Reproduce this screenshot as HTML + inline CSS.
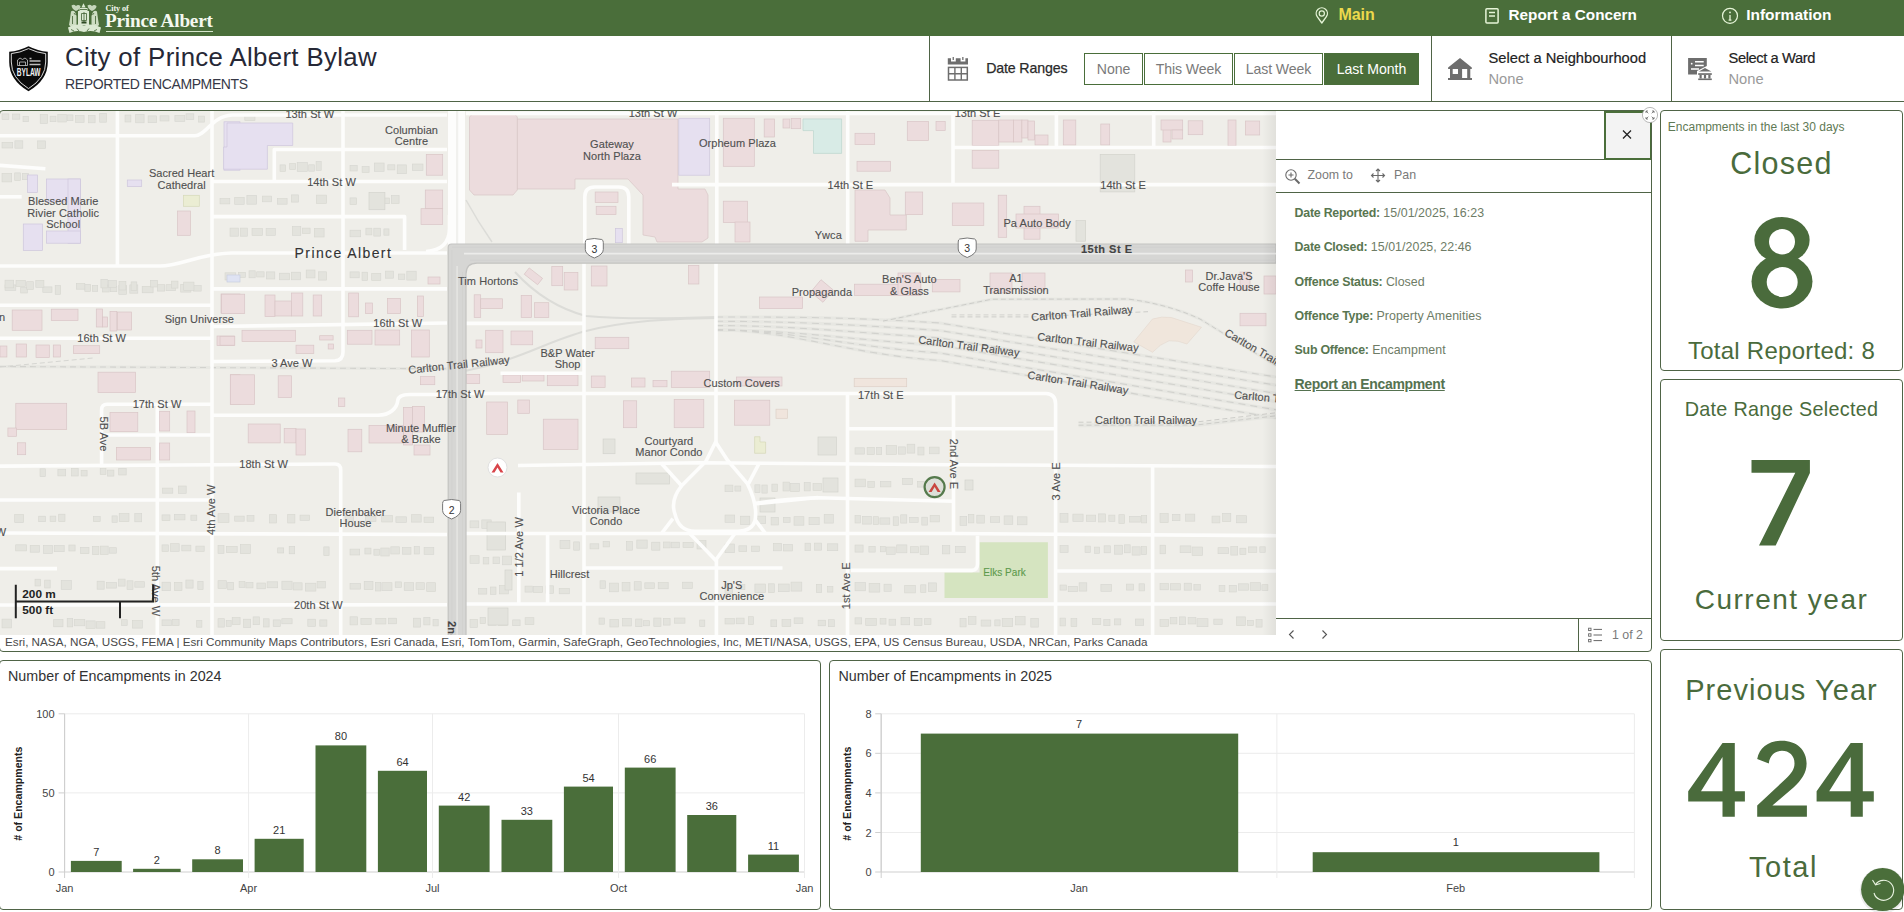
<!DOCTYPE html>
<html><head><meta charset="utf-8">
<style>
*{box-sizing:border-box;margin:0;padding:0}
html,body{width:1904px;height:912px;overflow:hidden;background:#fff;font-family:"Liberation Sans",sans-serif;position:relative}
.a{position:absolute;line-height:1;white-space:nowrap}
.bd{position:absolute;border:1px solid #4f6446;border-radius:4px;background:#fff}
.vl{position:absolute;width:1px;background:#4f6446}
.hl{position:absolute;height:1px;background:#4f6446}
.btn{position:absolute;top:53px;height:32px;border:1px solid #4a6e3a;color:#7a7a7a;font-size:14.6px;line-height:30px;text-align:center;background:#fff}
svg{position:absolute;overflow:visible}
</style></head><body>
<div style="position:absolute;left:0;top:0;width:1904px;height:36px;background:#4a6e3a"></div>
<svg style="left:0;top:0" width="120" height="36" viewBox="0 0 120 36">
<g fill="#dbe9d2">
<path d="M83.5 3.2 L85.6 7.5 L81.4 7.5 Z"/>
<path d="M71.5 5.5 q2.5 -1.5 4.5 0.5 q2 -2 4.5 0 q0 3 -4.5 5 q-4 -2 -4.5 -5.5 z" opacity="0.85"/>
<path d="M87.5 5.5 q2.5 -1.5 4.5 0.5 q2 -2 4.5 0 q0 3 -4.5 5 q-4 -2 -4.5 -5.5 z" opacity="0.85"/>
<path d="M79.5 8 h8 v3 h1.5 v14 h-11 v-14 h1.5 z"/>
<path d="M71 11.5 q2 -1.5 4 0.5 l1.5 4 v9.5 l-3 3.5 l-4.5 -4 l1 -6 z" opacity="0.9"/>
<path d="M97 11.5 q-2 -1.5 -4 0.5 l-1.5 4 v9.5 l3 3.5 l4.5 -4 l-1 -6 z" opacity="0.9"/>
<path d="M68 27.5 q8 -5 16 -2 q8 -3 17 2 l-1.5 5.5 q-7.5 -3.5 -15.5 -1 q-8 -2.5 -14.5 1 z"/>
</g>
<g fill="none" stroke="#3f5f31" stroke-width="0.8">
<path d="M81.5 13.5 h5 v7 h-5 z M84 12 v10"/>
<path d="M72.5 16 v8 M95.5 16 v8 M74 13 l1.5 2 M94 13 l-1.5 2"/>
<path d="M71 29.5 l3 1.5 M77 28.5 l2 2.5 M89 28.5 l-2 2.5 M97 29.5 l-3 1.5"/>
<path d="M80 9.5 h7"/>
</g>
<rect x="81.5" y="21.5" width="5" height="2" fill="#2d4a22"/>
</svg>
<div class="a" style="left:105.5px;top:4.86px;font-size:8.2px;color:#f4f8ef;font-weight:700;font-family:'Liberation Serif',serif;letter-spacing:-0.1px">City of</div>
<div class="a" style="left:105px;top:11.45px;font-size:19.2px;color:#f4f8ef;font-weight:700;font-family:'Liberation Serif',serif;letter-spacing:-0.2px">Prince Albert</div>
<div style="position:absolute;left:105.5px;top:31px;width:107.5px;height:1px;background:#d6e6cc"></div>
<svg style="left:1300px;top:0" width="60" height="36" viewBox="1300 0 60 36">
<path d="M1321.8 23 L1317.2 16.6 A5.6 5.6 0 1 1 1326.4 16.6 Z" fill="none" stroke="#e6f5d8" stroke-width="1.3" stroke-linejoin="round"/>
<circle cx="1321.8" cy="13.5" r="2.6" fill="none" stroke="#e6f5d8" stroke-width="1.2"/>
</svg>
<svg style="left:1470px;top:0" width="40" height="36" viewBox="1470 0 40 36">
<rect x="1485.9" y="8.8" width="12.2" height="14.2" rx="1" fill="none" stroke="#e6f5d8" stroke-width="1.5"/>
<path d="M1489 12.5 h6 M1489 16 h6" stroke="#e6f5d8" stroke-width="1.3"/>
</svg>
<svg style="left:1710px;top:0" width="40" height="36" viewBox="1710 0 40 36">
<circle cx="1730" cy="15.8" r="7.5" fill="none" stroke="#e6f5d8" stroke-width="1.2"/>
<circle cx="1730" cy="12.4" r="0.9" fill="#e6f5d8"/>
<path d="M1730 15 v5 M1728.6 20.2 h2.8" stroke="#e6f5d8" stroke-width="1.3"/>
</svg>
<div class="a" style="left:1338.4px;top:6.76px;font-size:16px;color:#ecd94c;font-weight:700;">Main</div>
<div class="a" style="left:1508.5px;top:7.35px;font-size:15.3px;color:#ffffff;font-weight:700;">Report a Concern</div>
<div class="a" style="left:1746.2px;top:7.18px;font-size:15.5px;color:#ffffff;font-weight:700;">Information</div>
<div class="hl" style="left:0;top:101px;width:1904px"></div>
<div class="vl" style="left:929px;top:36px;height:65px"></div>
<div class="vl" style="left:1431px;top:36px;height:65px"></div>
<div class="vl" style="left:1671px;top:36px;height:65px"></div>
<svg style="left:0;top:40px" width="60" height="60" viewBox="0 40 60 60">
<path d="M28.5 46.2 Q38 51 47.8 51.8 L47.8 62 Q47.8 80 28.5 91.3 Q9.2 80 9.2 62 L9.2 51.8 Q19 51 28.5 46.2 Z" fill="#0a0a0a"/>
<path d="M28.5 48.6 Q37 52.8 45.7 53.6 L45.7 62 Q45.7 78 28.5 88.6 Q11.3 78 11.3 62 L11.3 53.6 Q20 52.8 28.5 48.6 Z" fill="none" stroke="#f0f0f0" stroke-width="0.9"/>
<g fill="none" stroke="#c8c8c8" stroke-width="0.8">
<path d="M17.5 65.5 V60 L20 58 L22.5 59.5 L25 58 L27.5 60 V65.5 Z"/>
<path d="M19.5 65.5 V62 H25.5 V65.5"/>
</g>
<path d="M29.5 58.5 h2 M29.5 61 h11 M29.5 64.5 h11" stroke="#bdbdbd" stroke-width="1.6"/>
<text x="16.8" y="75.8" textLength="23.7" lengthAdjust="spacingAndGlyphs" font-family="Liberation Sans" font-weight="700" font-size="10" fill="#f4f4f4">BYLAW</text>
</svg>
<div class="a" style="left:65px;top:45.36px;font-size:25.8px;color:#262836;font-weight:400;letter-spacing:0.35px">City of Prince Albert Bylaw</div>
<div class="a" style="left:65px;top:77.05px;font-size:14px;color:#363846;font-weight:400;letter-spacing:-0.38px">REPORTED ENCAMPMENTS</div>
<svg style="left:940px;top:50px" width="40" height="40" viewBox="940 50 40 40">
<path d="M947.8 58.3 H951 V61.5 H955.8 V58.3 H960.6 V61.5 H965.4 V58.3 H968 V64.5 H947.8 Z" fill="#6e6e6e"/>
<rect x="952.6" y="57" width="1.3" height="3" fill="#6e6e6e"/><rect x="962.2" y="57" width="1.3" height="3" fill="#6e6e6e"/>
<rect x="948.5" y="67.4" width="18.8" height="12.6" fill="none" stroke="#6e6e6e" stroke-width="1.5"/>
<path d="M954.9 67.4 V80 M961.3 67.4 V80 M948.5 73.7 H967.3" stroke="#6e6e6e" stroke-width="1.4"/>
</svg>
<div class="a" style="left:986.2px;top:61.18px;font-size:14.2px;color:#2a2a2a;font-weight:400;-webkit-text-stroke:0.25px #2a2a2a;letter-spacing:-0.15px">Date Ranges</div>
<div class="btn" style="left:1084px;width:59px;font-size:14.1px;letter-spacing:-0.1px">None</div>
<div class="btn" style="left:1144px;width:89px;font-size:14.1px;letter-spacing:-0.1px">This Week</div>
<div class="btn" style="left:1234px;width:89px;font-size:14.1px;letter-spacing:-0.1px">Last Week</div>
<div class="btn" style="left:1324px;width:95px;background:#4a6e3a;color:#fff;border-color:#4a6e3a;font-size:14.1px">Last Month</div>
<svg style="left:1440px;top:50px" width="40" height="40" viewBox="1440 50 40 40">
<path d="M1460 58.1 L1471.8 67.6 V69 H1470.3 V78 H1472 V80 H1448 V78 H1450 V69 H1448.1 V67.6 Z M1452.7 69 V73.9 H1458 V69 Z M1462.1 69 V78 H1467.2 V69 Z" fill="#6e6e6e" fill-rule="evenodd"/>
</svg>
<div class="a" style="left:1488.5px;top:50.56px;font-size:14.7px;color:#222;font-weight:400;-webkit-text-stroke:0.2px #222">Select a Neighbourhood</div>
<div class="a" style="left:1488.5px;top:71.56px;font-size:14.7px;color:#9a9a9a;font-weight:400;">None</div>
<svg style="left:1680px;top:50px" width="40" height="40" viewBox="1680 50 40 40">
<path d="M1688.1 57.9 H1706.8 V66 L1697 71 V74.6 H1688.1 Z" fill="#6e6e6e"/>
<path d="M1695 61.8 H1703.7 M1695 65.6 H1703.7 M1691 68.9 H1699" stroke="#fff" stroke-width="1.5"/>
<circle cx="1691.7" cy="63.7" r="0.9" fill="#fff"/>
<path d="M1705 68 L1711.4 71.5 H1698.9 Z" fill="#6e6e6e"/>
<rect x="1698.2" y="73.2" width="13.6" height="1.7" fill="#6e6e6e"/>
<rect x="1699.5" y="75" width="2.2" height="3.5" fill="#6e6e6e"/><rect x="1703.9" y="75" width="2.2" height="3.5" fill="#6e6e6e"/><rect x="1708.3" y="75" width="2.2" height="3.5" fill="#6e6e6e"/>
<rect x="1698.2" y="78.5" width="13.6" height="1.6" fill="#6e6e6e"/>
</svg>
<div class="a" style="left:1728.5px;top:50.56px;font-size:14.7px;color:#222;font-weight:400;-webkit-text-stroke:0.2px #222;letter-spacing:-0.4px">Select a Ward</div>
<div class="a" style="left:1728.5px;top:71.56px;font-size:14.7px;color:#9a9a9a;font-weight:400;">None</div>
<svg style="left:0;top:111px;overflow:hidden" width="1276" height="524" viewBox="0 111 1276 524"><rect x="0" y="111" width="1276" height="524" fill="#efeee9"/><path d="M1133.8 341.9 L1152.5 319 Q1162 316 1171.3 317.5 L1201.5 327.3 L1186.9 344 Q1178 340 1169 340.8 Q1160 344 1152.5 352.3 Z" fill="#f0e6dc" stroke="#e2d6cc" stroke-width="0.6"/><rect x="2.0" y="113.9" width="6.9" height="5.6" fill="#e3e3dd" stroke="#d6d6d0" stroke-width="0.6"/><rect x="12.6" y="114.0" width="7.2" height="5.2" fill="#e3e3dd" stroke="#d6d6d0" stroke-width="0.6"/><rect x="23.0" y="116.3" width="5.4" height="5.4" fill="#e3e3dd" stroke="#d6d6d0" stroke-width="0.6"/><rect x="40.2" y="114.6" width="7.4" height="8.9" fill="#e3e3dd" stroke="#d6d6d0" stroke-width="0.6"/><rect x="50.1" y="116.2" width="5.9" height="5.5" fill="#e3e3dd" stroke="#d6d6d0" stroke-width="0.6"/><rect x="57.8" y="114.4" width="8.5" height="7.6" fill="#e3e3dd" stroke="#d6d6d0" stroke-width="0.6"/><rect x="67.6" y="114.9" width="5.4" height="5.8" fill="#e3e3dd" stroke="#d6d6d0" stroke-width="0.6"/><rect x="75.6" y="115.5" width="8.5" height="6.8" fill="#e3e3dd" stroke="#d6d6d0" stroke-width="0.6"/><rect x="88.6" y="115.5" width="6.5" height="7.3" fill="#e3e3dd" stroke="#d6d6d0" stroke-width="0.6"/><rect x="99.7" y="113.3" width="6.7" height="8.9" fill="#e3e3dd" stroke="#d6d6d0" stroke-width="0.6"/><rect x="125.0" y="115.0" width="5.9" height="7.0" fill="#e3e3dd" stroke="#d6d6d0" stroke-width="0.6"/><rect x="135.7" y="114.3" width="8.4" height="8.5" fill="#e3e3dd" stroke="#d6d6d0" stroke-width="0.6"/><rect x="148.1" y="115.9" width="8.5" height="6.8" fill="#e3e3dd" stroke="#d6d6d0" stroke-width="0.6"/><rect x="160.0" y="115.8" width="9.0" height="5.2" fill="#e3e3dd" stroke="#d6d6d0" stroke-width="0.6"/><rect x="174.9" y="115.4" width="9.9" height="6.1" fill="#e3e3dd" stroke="#d6d6d0" stroke-width="0.6"/><rect x="186.0" y="113.8" width="7.8" height="5.7" fill="#e3e3dd" stroke="#d6d6d0" stroke-width="0.6"/><rect x="198.6" y="116.1" width="5.8" height="6.0" fill="#e3e3dd" stroke="#d6d6d0" stroke-width="0.6"/><rect x="244.8" y="114.5" width="10.2" height="6.1" fill="#e3e3dd" stroke="#d6d6d0" stroke-width="0.6"/><rect x="2.0" y="142.4" width="10.7" height="5.6" fill="#e3e3dd" stroke="#d6d6d0" stroke-width="0.6"/><rect x="14.9" y="140.8" width="7.9" height="7.4" fill="#e3e3dd" stroke="#d6d6d0" stroke-width="0.6"/><rect x="37.6" y="140.9" width="8.1" height="7.5" fill="#e3e3dd" stroke="#d6d6d0" stroke-width="0.6"/><rect x="2.0" y="173.4" width="9.7" height="8.5" fill="#e3e3dd" stroke="#d6d6d0" stroke-width="0.6"/><rect x="14.7" y="172.9" width="5.6" height="7.5" fill="#e3e3dd" stroke="#d6d6d0" stroke-width="0.6"/><rect x="22.3" y="173.3" width="6.0" height="6.4" fill="#e3e3dd" stroke="#d6d6d0" stroke-width="0.6"/><rect x="280.0" y="164.9" width="5.6" height="6.5" fill="#e3e3dd" stroke="#d6d6d0" stroke-width="0.6"/><rect x="289.7" y="163.6" width="5.9" height="6.0" fill="#e3e3dd" stroke="#d6d6d0" stroke-width="0.6"/><rect x="297.2" y="162.5" width="10.1" height="9.0" fill="#e3e3dd" stroke="#d6d6d0" stroke-width="0.6"/><rect x="308.7" y="164.8" width="5.6" height="6.4" fill="#e3e3dd" stroke="#d6d6d0" stroke-width="0.6"/><rect x="316.1" y="161.5" width="5.1" height="8.8" fill="#e3e3dd" stroke="#d6d6d0" stroke-width="0.6"/><rect x="350.0" y="165.3" width="7.2" height="5.7" fill="#e3e3dd" stroke="#d6d6d0" stroke-width="0.6"/><rect x="362.1" y="166.5" width="7.0" height="5.9" fill="#e3e3dd" stroke="#d6d6d0" stroke-width="0.6"/><rect x="374.3" y="163.0" width="9.8" height="8.3" fill="#e3e3dd" stroke="#d6d6d0" stroke-width="0.6"/><rect x="387.8" y="164.8" width="7.1" height="5.1" fill="#e3e3dd" stroke="#d6d6d0" stroke-width="0.6"/><rect x="397.2" y="164.9" width="9.2" height="8.8" fill="#e3e3dd" stroke="#d6d6d0" stroke-width="0.6"/><rect x="412.3" y="164.0" width="10.7" height="6.5" fill="#e3e3dd" stroke="#d6d6d0" stroke-width="0.6"/><rect x="220.0" y="198.6" width="9.8" height="5.3" fill="#e3e3dd" stroke="#d6d6d0" stroke-width="0.6"/><rect x="234.7" y="197.4" width="9.5" height="6.9" fill="#e3e3dd" stroke="#d6d6d0" stroke-width="0.6"/><rect x="246.9" y="195.3" width="9.8" height="8.9" fill="#e3e3dd" stroke="#d6d6d0" stroke-width="0.6"/><rect x="262.4" y="196.1" width="9.3" height="5.7" fill="#e3e3dd" stroke="#d6d6d0" stroke-width="0.6"/><rect x="277.3" y="198.6" width="9.8" height="5.6" fill="#e3e3dd" stroke="#d6d6d0" stroke-width="0.6"/><rect x="291.4" y="194.9" width="7.1" height="7.2" fill="#e3e3dd" stroke="#d6d6d0" stroke-width="0.6"/><rect x="316.4" y="195.1" width="10.2" height="8.3" fill="#e3e3dd" stroke="#d6d6d0" stroke-width="0.6"/><rect x="350.0" y="197.9" width="6.6" height="6.7" fill="#e3e3dd" stroke="#d6d6d0" stroke-width="0.6"/><rect x="370.2" y="196.6" width="10.5" height="7.0" fill="#e3e3dd" stroke="#d6d6d0" stroke-width="0.6"/><rect x="381.8" y="198.0" width="7.6" height="5.7" fill="#e3e3dd" stroke="#d6d6d0" stroke-width="0.6"/><rect x="391.3" y="195.5" width="7.8" height="7.9" fill="#e3e3dd" stroke="#d6d6d0" stroke-width="0.6"/><rect x="230.0" y="228.1" width="8.3" height="8.1" fill="#e3e3dd" stroke="#d6d6d0" stroke-width="0.6"/><rect x="240.6" y="228.1" width="6.7" height="8.1" fill="#e3e3dd" stroke="#d6d6d0" stroke-width="0.6"/><rect x="252.0" y="228.6" width="10.5" height="6.8" fill="#e3e3dd" stroke="#d6d6d0" stroke-width="0.6"/><rect x="266.1" y="228.5" width="9.2" height="6.8" fill="#e3e3dd" stroke="#d6d6d0" stroke-width="0.6"/><rect x="292.4" y="226.5" width="8.4" height="8.8" fill="#e3e3dd" stroke="#d6d6d0" stroke-width="0.6"/><rect x="302.4" y="228.1" width="7.7" height="5.3" fill="#e3e3dd" stroke="#d6d6d0" stroke-width="0.6"/><rect x="314.4" y="228.4" width="9.7" height="8.6" fill="#e3e3dd" stroke="#d6d6d0" stroke-width="0.6"/><rect x="350.0" y="230.2" width="10.7" height="6.6" fill="#e3e3dd" stroke="#d6d6d0" stroke-width="0.6"/><rect x="365.9" y="228.2" width="6.0" height="6.7" fill="#e3e3dd" stroke="#d6d6d0" stroke-width="0.6"/><rect x="373.8" y="228.2" width="6.9" height="7.9" fill="#e3e3dd" stroke="#d6d6d0" stroke-width="0.6"/><rect x="383.9" y="228.9" width="5.1" height="6.3" fill="#e3e3dd" stroke="#d6d6d0" stroke-width="0.6"/><rect x="5.0" y="284.9" width="10.8" height="5.4" fill="#e3e3dd" stroke="#d6d6d0" stroke-width="0.6"/><rect x="20.7" y="287.5" width="6.6" height="5.5" fill="#e3e3dd" stroke="#d6d6d0" stroke-width="0.6"/><rect x="42.8" y="286.9" width="9.2" height="5.4" fill="#e3e3dd" stroke="#d6d6d0" stroke-width="0.6"/><rect x="55.2" y="285.5" width="5.4" height="8.8" fill="#e3e3dd" stroke="#d6d6d0" stroke-width="0.6"/><rect x="84.8" y="284.3" width="5.8" height="7.1" fill="#e3e3dd" stroke="#d6d6d0" stroke-width="0.6"/><rect x="92.4" y="285.5" width="5.3" height="5.8" fill="#e3e3dd" stroke="#d6d6d0" stroke-width="0.6"/><rect x="102.5" y="285.0" width="6.7" height="7.0" fill="#e3e3dd" stroke="#d6d6d0" stroke-width="0.6"/><rect x="110.3" y="286.6" width="6.5" height="5.1" fill="#e3e3dd" stroke="#d6d6d0" stroke-width="0.6"/><rect x="118.8" y="285.6" width="7.8" height="8.7" fill="#e3e3dd" stroke="#d6d6d0" stroke-width="0.6"/><rect x="129.8" y="284.9" width="8.0" height="8.3" fill="#e3e3dd" stroke="#d6d6d0" stroke-width="0.6"/><rect x="142.2" y="286.4" width="10.9" height="6.4" fill="#e3e3dd" stroke="#d6d6d0" stroke-width="0.6"/><rect x="157.3" y="284.7" width="7.4" height="6.4" fill="#e3e3dd" stroke="#d6d6d0" stroke-width="0.6"/><rect x="166.0" y="284.7" width="9.4" height="6.0" fill="#e3e3dd" stroke="#d6d6d0" stroke-width="0.6"/><rect x="180.7" y="284.4" width="10.2" height="7.7" fill="#e3e3dd" stroke="#d6d6d0" stroke-width="0.6"/><rect x="193.4" y="285.5" width="7.8" height="5.6" fill="#e3e3dd" stroke="#d6d6d0" stroke-width="0.6"/><rect x="225.0" y="272.8" width="10.8" height="7.2" fill="#e3e3dd" stroke="#d6d6d0" stroke-width="0.6"/><rect x="238.4" y="272.4" width="7.1" height="5.0" fill="#e3e3dd" stroke="#d6d6d0" stroke-width="0.6"/><rect x="249.0" y="270.8" width="6.2" height="7.0" fill="#e3e3dd" stroke="#d6d6d0" stroke-width="0.6"/><rect x="256.7" y="271.8" width="7.4" height="5.2" fill="#e3e3dd" stroke="#d6d6d0" stroke-width="0.6"/><rect x="266.3" y="271.9" width="8.5" height="7.1" fill="#e3e3dd" stroke="#d6d6d0" stroke-width="0.6"/><rect x="279.3" y="273.2" width="10.3" height="6.6" fill="#e3e3dd" stroke="#d6d6d0" stroke-width="0.6"/><rect x="291.4" y="272.2" width="9.3" height="7.6" fill="#e3e3dd" stroke="#d6d6d0" stroke-width="0.6"/><rect x="306.2" y="270.0" width="8.8" height="7.9" fill="#e3e3dd" stroke="#d6d6d0" stroke-width="0.6"/><rect x="318.6" y="271.8" width="8.0" height="8.3" fill="#e3e3dd" stroke="#d6d6d0" stroke-width="0.6"/><rect x="350.0" y="271.9" width="9.2" height="5.9" fill="#e3e3dd" stroke="#d6d6d0" stroke-width="0.6"/><rect x="362.0" y="272.2" width="5.6" height="8.3" fill="#e3e3dd" stroke="#d6d6d0" stroke-width="0.6"/><rect x="371.7" y="273.4" width="9.1" height="7.0" fill="#e3e3dd" stroke="#d6d6d0" stroke-width="0.6"/><rect x="385.5" y="271.1" width="8.0" height="7.1" fill="#e3e3dd" stroke="#d6d6d0" stroke-width="0.6"/><rect x="398.3" y="274.0" width="6.5" height="5.3" fill="#e3e3dd" stroke="#d6d6d0" stroke-width="0.6"/><rect x="406.8" y="271.2" width="9.4" height="8.9" fill="#e3e3dd" stroke="#d6d6d0" stroke-width="0.6"/><rect x="5.0" y="280.2" width="8.7" height="7.6" fill="#e3e3dd" stroke="#d6d6d0" stroke-width="0.6"/><rect x="16.0" y="280.4" width="9.5" height="6.2" fill="#e3e3dd" stroke="#d6d6d0" stroke-width="0.6"/><rect x="26.7" y="281.7" width="6.6" height="7.7" fill="#e3e3dd" stroke="#d6d6d0" stroke-width="0.6"/><rect x="35.8" y="280.4" width="8.1" height="6.9" fill="#e3e3dd" stroke="#d6d6d0" stroke-width="0.6"/><rect x="76.3" y="283.6" width="8.5" height="5.6" fill="#e3e3dd" stroke="#d6d6d0" stroke-width="0.6"/><rect x="100.9" y="279.3" width="6.4" height="8.6" fill="#e3e3dd" stroke="#d6d6d0" stroke-width="0.6"/><rect x="108.3" y="280.5" width="8.0" height="6.8" fill="#e3e3dd" stroke="#d6d6d0" stroke-width="0.6"/><rect x="119.0" y="281.6" width="6.9" height="8.4" fill="#e3e3dd" stroke="#d6d6d0" stroke-width="0.6"/><rect x="131.1" y="281.9" width="5.7" height="8.7" fill="#e3e3dd" stroke="#d6d6d0" stroke-width="0.6"/><rect x="150.4" y="280.3" width="7.2" height="6.7" fill="#e3e3dd" stroke="#d6d6d0" stroke-width="0.6"/><rect x="171.4" y="281.1" width="6.6" height="7.0" fill="#e3e3dd" stroke="#d6d6d0" stroke-width="0.6"/><rect x="183.7" y="282.1" width="10.3" height="8.2" fill="#e3e3dd" stroke="#d6d6d0" stroke-width="0.6"/><rect x="40.0" y="468.8" width="5.3" height="7.9" fill="#e3e3dd" stroke="#d6d6d0" stroke-width="0.6"/><rect x="57.9" y="469.5" width="7.8" height="6.4" fill="#e3e3dd" stroke="#d6d6d0" stroke-width="0.6"/><rect x="71.6" y="468.4" width="6.6" height="7.6" fill="#e3e3dd" stroke="#d6d6d0" stroke-width="0.6"/><rect x="81.1" y="470.4" width="6.0" height="5.6" fill="#e3e3dd" stroke="#d6d6d0" stroke-width="0.6"/><rect x="100.2" y="468.6" width="5.8" height="5.8" fill="#e3e3dd" stroke="#d6d6d0" stroke-width="0.6"/><rect x="107.5" y="470.1" width="6.4" height="6.0" fill="#e3e3dd" stroke="#d6d6d0" stroke-width="0.6"/><rect x="118.7" y="468.3" width="7.5" height="6.7" fill="#e3e3dd" stroke="#d6d6d0" stroke-width="0.6"/><rect x="162.6" y="488.1" width="10.2" height="5.1" fill="#e3e3dd" stroke="#d6d6d0" stroke-width="0.6"/><rect x="178.4" y="486.0" width="7.8" height="7.3" fill="#e3e3dd" stroke="#d6d6d0" stroke-width="0.6"/><rect x="14.7" y="514.6" width="8.9" height="8.1" fill="#e3e3dd" stroke="#d6d6d0" stroke-width="0.6"/><rect x="38.7" y="516.2" width="6.8" height="5.5" fill="#e3e3dd" stroke="#d6d6d0" stroke-width="0.6"/><rect x="50.1" y="516.1" width="5.7" height="5.3" fill="#e3e3dd" stroke="#d6d6d0" stroke-width="0.6"/><rect x="58.7" y="514.2" width="6.3" height="7.4" fill="#e3e3dd" stroke="#d6d6d0" stroke-width="0.6"/><rect x="93.4" y="516.5" width="6.8" height="5.1" fill="#e3e3dd" stroke="#d6d6d0" stroke-width="0.6"/><rect x="112.0" y="515.9" width="5.2" height="6.4" fill="#e3e3dd" stroke="#d6d6d0" stroke-width="0.6"/><rect x="119.2" y="513.6" width="9.8" height="8.0" fill="#e3e3dd" stroke="#d6d6d0" stroke-width="0.6"/><rect x="134.8" y="513.5" width="6.9" height="8.3" fill="#e3e3dd" stroke="#d6d6d0" stroke-width="0.6"/><rect x="162.0" y="514.9" width="8.0" height="5.7" fill="#e3e3dd" stroke="#d6d6d0" stroke-width="0.6"/><rect x="174.3" y="514.3" width="10.7" height="5.6" fill="#e3e3dd" stroke="#d6d6d0" stroke-width="0.6"/><rect x="190.9" y="515.1" width="5.9" height="5.2" fill="#e3e3dd" stroke="#d6d6d0" stroke-width="0.6"/><rect x="218.0" y="513.7" width="11.0" height="8.7" fill="#e3e3dd" stroke="#d6d6d0" stroke-width="0.6"/><rect x="234.7" y="516.1" width="9.5" height="5.1" fill="#e3e3dd" stroke="#d6d6d0" stroke-width="0.6"/><rect x="247.0" y="515.5" width="7.0" height="5.7" fill="#e3e3dd" stroke="#d6d6d0" stroke-width="0.6"/><rect x="269.5" y="514.7" width="7.1" height="8.3" fill="#e3e3dd" stroke="#d6d6d0" stroke-width="0.6"/><rect x="287.7" y="514.4" width="7.2" height="8.6" fill="#e3e3dd" stroke="#d6d6d0" stroke-width="0.6"/><rect x="300.0" y="515.1" width="9.6" height="5.2" fill="#e3e3dd" stroke="#d6d6d0" stroke-width="0.6"/><rect x="345.0" y="515.4" width="8.7" height="6.0" fill="#e3e3dd" stroke="#d6d6d0" stroke-width="0.6"/><rect x="365.3" y="516.4" width="10.7" height="5.1" fill="#e3e3dd" stroke="#d6d6d0" stroke-width="0.6"/><rect x="381.7" y="515.5" width="10.7" height="6.5" fill="#e3e3dd" stroke="#d6d6d0" stroke-width="0.6"/><rect x="395.9" y="516.8" width="10.6" height="5.7" fill="#e3e3dd" stroke="#d6d6d0" stroke-width="0.6"/><rect x="411.6" y="514.7" width="9.6" height="7.4" fill="#e3e3dd" stroke="#d6d6d0" stroke-width="0.6"/><rect x="424.0" y="517.1" width="9.7" height="5.3" fill="#e3e3dd" stroke="#d6d6d0" stroke-width="0.6"/><rect x="15.7" y="544.8" width="10.9" height="6.1" fill="#e3e3dd" stroke="#d6d6d0" stroke-width="0.6"/><rect x="30.2" y="545.4" width="9.3" height="6.8" fill="#e3e3dd" stroke="#d6d6d0" stroke-width="0.6"/><rect x="43.5" y="545.5" width="9.0" height="8.0" fill="#e3e3dd" stroke="#d6d6d0" stroke-width="0.6"/><rect x="54.2" y="545.5" width="10.0" height="6.2" fill="#e3e3dd" stroke="#d6d6d0" stroke-width="0.6"/><rect x="68.9" y="545.0" width="6.2" height="6.0" fill="#e3e3dd" stroke="#d6d6d0" stroke-width="0.6"/><rect x="80.5" y="547.3" width="8.5" height="6.3" fill="#e3e3dd" stroke="#d6d6d0" stroke-width="0.6"/><rect x="92.5" y="546.4" width="6.4" height="8.2" fill="#e3e3dd" stroke="#d6d6d0" stroke-width="0.6"/><rect x="100.4" y="546.1" width="7.8" height="8.3" fill="#e3e3dd" stroke="#d6d6d0" stroke-width="0.6"/><rect x="109.5" y="547.7" width="6.8" height="5.5" fill="#e3e3dd" stroke="#d6d6d0" stroke-width="0.6"/><rect x="162.0" y="544.9" width="6.3" height="6.5" fill="#e3e3dd" stroke="#d6d6d0" stroke-width="0.6"/><rect x="170.6" y="543.7" width="8.6" height="7.6" fill="#e3e3dd" stroke="#d6d6d0" stroke-width="0.6"/><rect x="181.8" y="545.2" width="9.1" height="5.7" fill="#e3e3dd" stroke="#d6d6d0" stroke-width="0.6"/><rect x="195.9" y="546.1" width="8.3" height="5.3" fill="#e3e3dd" stroke="#d6d6d0" stroke-width="0.6"/><rect x="218.0" y="545.5" width="6.0" height="7.8" fill="#e3e3dd" stroke="#d6d6d0" stroke-width="0.6"/><rect x="226.5" y="546.4" width="10.7" height="6.2" fill="#e3e3dd" stroke="#d6d6d0" stroke-width="0.6"/><rect x="240.3" y="544.6" width="10.2" height="9.0" fill="#e3e3dd" stroke="#d6d6d0" stroke-width="0.6"/><rect x="277.7" y="547.9" width="6.0" height="5.1" fill="#e3e3dd" stroke="#d6d6d0" stroke-width="0.6"/><rect x="289.2" y="546.3" width="5.5" height="7.5" fill="#e3e3dd" stroke="#d6d6d0" stroke-width="0.6"/><rect x="323.8" y="546.9" width="5.3" height="8.7" fill="#e3e3dd" stroke="#d6d6d0" stroke-width="0.6"/><rect x="350.0" y="549.1" width="9.7" height="5.9" fill="#e3e3dd" stroke="#d6d6d0" stroke-width="0.6"/><rect x="364.9" y="548.1" width="6.1" height="5.9" fill="#e3e3dd" stroke="#d6d6d0" stroke-width="0.6"/><rect x="373.9" y="549.2" width="5.7" height="6.0" fill="#e3e3dd" stroke="#d6d6d0" stroke-width="0.6"/><rect x="380.8" y="548.0" width="8.4" height="8.0" fill="#e3e3dd" stroke="#d6d6d0" stroke-width="0.6"/><rect x="390.8" y="546.8" width="8.6" height="7.2" fill="#e3e3dd" stroke="#d6d6d0" stroke-width="0.6"/><rect x="402.5" y="547.5" width="8.5" height="6.7" fill="#e3e3dd" stroke="#d6d6d0" stroke-width="0.6"/><rect x="414.2" y="546.5" width="5.1" height="7.5" fill="#e3e3dd" stroke="#d6d6d0" stroke-width="0.6"/><rect x="424.1" y="547.5" width="9.7" height="6.8" fill="#e3e3dd" stroke="#d6d6d0" stroke-width="0.6"/><rect x="35.0" y="579.2" width="5.6" height="6.8" fill="#e3e3dd" stroke="#d6d6d0" stroke-width="0.6"/><rect x="44.7" y="580.1" width="5.5" height="7.9" fill="#e3e3dd" stroke="#d6d6d0" stroke-width="0.6"/><rect x="61.2" y="580.5" width="10.1" height="9.0" fill="#e3e3dd" stroke="#d6d6d0" stroke-width="0.6"/><rect x="97.1" y="581.2" width="7.1" height="8.0" fill="#e3e3dd" stroke="#d6d6d0" stroke-width="0.6"/><rect x="106.6" y="582.5" width="9.9" height="5.6" fill="#e3e3dd" stroke="#d6d6d0" stroke-width="0.6"/><rect x="118.5" y="579.1" width="6.6" height="7.0" fill="#e3e3dd" stroke="#d6d6d0" stroke-width="0.6"/><rect x="127.0" y="580.8" width="6.0" height="8.7" fill="#e3e3dd" stroke="#d6d6d0" stroke-width="0.6"/><rect x="134.8" y="581.7" width="9.7" height="5.5" fill="#e3e3dd" stroke="#d6d6d0" stroke-width="0.6"/><rect x="162.0" y="582.2" width="8.5" height="8.5" fill="#e3e3dd" stroke="#d6d6d0" stroke-width="0.6"/><rect x="174.6" y="582.4" width="7.4" height="8.2" fill="#e3e3dd" stroke="#d6d6d0" stroke-width="0.6"/><rect x="185.9" y="580.0" width="7.2" height="8.1" fill="#e3e3dd" stroke="#d6d6d0" stroke-width="0.6"/><rect x="197.8" y="581.3" width="5.3" height="8.3" fill="#e3e3dd" stroke="#d6d6d0" stroke-width="0.6"/><rect x="218.0" y="580.7" width="8.5" height="7.7" fill="#e3e3dd" stroke="#d6d6d0" stroke-width="0.6"/><rect x="227.7" y="582.3" width="5.9" height="7.5" fill="#e3e3dd" stroke="#d6d6d0" stroke-width="0.6"/><rect x="239.1" y="581.6" width="5.8" height="5.9" fill="#e3e3dd" stroke="#d6d6d0" stroke-width="0.6"/><rect x="245.9" y="582.5" width="7.1" height="5.4" fill="#e3e3dd" stroke="#d6d6d0" stroke-width="0.6"/><rect x="256.9" y="583.0" width="8.5" height="5.8" fill="#e3e3dd" stroke="#d6d6d0" stroke-width="0.6"/><rect x="267.1" y="581.8" width="10.6" height="6.0" fill="#e3e3dd" stroke="#d6d6d0" stroke-width="0.6"/><rect x="281.9" y="581.2" width="10.2" height="8.1" fill="#e3e3dd" stroke="#d6d6d0" stroke-width="0.6"/><rect x="293.2" y="582.8" width="8.9" height="7.2" fill="#e3e3dd" stroke="#d6d6d0" stroke-width="0.6"/><rect x="305.3" y="583.2" width="10.6" height="7.9" fill="#e3e3dd" stroke="#d6d6d0" stroke-width="0.6"/><rect x="317.1" y="581.4" width="8.2" height="6.6" fill="#e3e3dd" stroke="#d6d6d0" stroke-width="0.6"/><rect x="350.0" y="583.5" width="10.6" height="5.6" fill="#e3e3dd" stroke="#d6d6d0" stroke-width="0.6"/><rect x="364.2" y="581.3" width="8.8" height="8.3" fill="#e3e3dd" stroke="#d6d6d0" stroke-width="0.6"/><rect x="375.5" y="582.4" width="5.3" height="8.6" fill="#e3e3dd" stroke="#d6d6d0" stroke-width="0.6"/><rect x="381.9" y="582.7" width="10.1" height="8.0" fill="#e3e3dd" stroke="#d6d6d0" stroke-width="0.6"/><rect x="395.2" y="581.9" width="6.4" height="5.4" fill="#e3e3dd" stroke="#d6d6d0" stroke-width="0.6"/><rect x="404.2" y="582.7" width="9.5" height="7.8" fill="#e3e3dd" stroke="#d6d6d0" stroke-width="0.6"/><rect x="416.0" y="582.7" width="8.3" height="6.7" fill="#e3e3dd" stroke="#d6d6d0" stroke-width="0.6"/><rect x="426.7" y="582.7" width="8.9" height="8.9" fill="#e3e3dd" stroke="#d6d6d0" stroke-width="0.6"/><rect x="2.0" y="619.1" width="9.5" height="8.8" fill="#e3e3dd" stroke="#d6d6d0" stroke-width="0.6"/><rect x="53.7" y="619.5" width="9.3" height="7.3" fill="#e3e3dd" stroke="#d6d6d0" stroke-width="0.6"/><rect x="67.2" y="618.3" width="5.5" height="8.6" fill="#e3e3dd" stroke="#d6d6d0" stroke-width="0.6"/><rect x="74.2" y="619.4" width="10.6" height="6.4" fill="#e3e3dd" stroke="#d6d6d0" stroke-width="0.6"/><rect x="86.0" y="620.9" width="9.2" height="7.5" fill="#e3e3dd" stroke="#d6d6d0" stroke-width="0.6"/><rect x="96.4" y="621.7" width="8.5" height="6.5" fill="#e3e3dd" stroke="#d6d6d0" stroke-width="0.6"/><rect x="121.6" y="619.7" width="5.6" height="5.8" fill="#e3e3dd" stroke="#d6d6d0" stroke-width="0.6"/><rect x="132.4" y="620.6" width="9.9" height="7.5" fill="#e3e3dd" stroke="#d6d6d0" stroke-width="0.6"/><rect x="162.0" y="619.9" width="9.5" height="5.8" fill="#e3e3dd" stroke="#d6d6d0" stroke-width="0.6"/><rect x="172.6" y="619.5" width="6.5" height="6.1" fill="#e3e3dd" stroke="#d6d6d0" stroke-width="0.6"/><rect x="196.7" y="620.5" width="5.2" height="6.7" fill="#e3e3dd" stroke="#d6d6d0" stroke-width="0.6"/><rect x="218.0" y="618.7" width="6.3" height="8.4" fill="#e3e3dd" stroke="#d6d6d0" stroke-width="0.6"/><rect x="226.2" y="620.5" width="5.0" height="5.8" fill="#e3e3dd" stroke="#d6d6d0" stroke-width="0.6"/><rect x="232.2" y="617.6" width="7.9" height="7.0" fill="#e3e3dd" stroke="#d6d6d0" stroke-width="0.6"/><rect x="243.6" y="619.2" width="7.1" height="8.3" fill="#e3e3dd" stroke="#d6d6d0" stroke-width="0.6"/><rect x="253.1" y="616.9" width="6.3" height="7.8" fill="#e3e3dd" stroke="#d6d6d0" stroke-width="0.6"/><rect x="263.6" y="618.8" width="5.5" height="8.2" fill="#e3e3dd" stroke="#d6d6d0" stroke-width="0.6"/><rect x="273.2" y="619.9" width="7.1" height="6.6" fill="#e3e3dd" stroke="#d6d6d0" stroke-width="0.6"/><rect x="281.8" y="618.7" width="10.3" height="5.1" fill="#e3e3dd" stroke="#d6d6d0" stroke-width="0.6"/><rect x="307.8" y="619.2" width="7.8" height="7.1" fill="#e3e3dd" stroke="#d6d6d0" stroke-width="0.6"/><rect x="319.8" y="619.9" width="7.1" height="6.3" fill="#e3e3dd" stroke="#d6d6d0" stroke-width="0.6"/><rect x="350.0" y="616.8" width="7.6" height="8.1" fill="#e3e3dd" stroke="#d6d6d0" stroke-width="0.6"/><rect x="360.9" y="618.4" width="10.3" height="6.0" fill="#e3e3dd" stroke="#d6d6d0" stroke-width="0.6"/><rect x="375.8" y="618.4" width="10.1" height="5.6" fill="#e3e3dd" stroke="#d6d6d0" stroke-width="0.6"/><rect x="388.5" y="618.2" width="8.1" height="5.6" fill="#e3e3dd" stroke="#d6d6d0" stroke-width="0.6"/><rect x="413.4" y="618.2" width="7.3" height="8.9" fill="#e3e3dd" stroke="#d6d6d0" stroke-width="0.6"/><rect x="423.8" y="617.3" width="6.2" height="7.6" fill="#e3e3dd" stroke="#d6d6d0" stroke-width="0.6"/><rect x="433.0" y="619.3" width="5.2" height="6.6" fill="#e3e3dd" stroke="#d6d6d0" stroke-width="0.6"/><rect x="470.0" y="520.9" width="8.8" height="6.9" fill="#e3e3dd" stroke="#d6d6d0" stroke-width="0.6"/><rect x="481.8" y="519.9" width="9.4" height="8.6" fill="#e3e3dd" stroke="#d6d6d0" stroke-width="0.6"/><rect x="496.0" y="522.2" width="7.5" height="5.9" fill="#e3e3dd" stroke="#d6d6d0" stroke-width="0.6"/><rect x="470.0" y="555.7" width="9.1" height="7.6" fill="#e3e3dd" stroke="#d6d6d0" stroke-width="0.6"/><rect x="483.2" y="557.3" width="5.6" height="6.7" fill="#e3e3dd" stroke="#d6d6d0" stroke-width="0.6"/><rect x="493.0" y="557.0" width="6.5" height="6.7" fill="#e3e3dd" stroke="#d6d6d0" stroke-width="0.6"/><rect x="502.5" y="556.1" width="9.1" height="8.7" fill="#e3e3dd" stroke="#d6d6d0" stroke-width="0.6"/><rect x="478.5" y="588.5" width="8.3" height="5.6" fill="#e3e3dd" stroke="#d6d6d0" stroke-width="0.6"/><rect x="490.4" y="587.0" width="5.6" height="7.3" fill="#e3e3dd" stroke="#d6d6d0" stroke-width="0.6"/><rect x="499.5" y="585.6" width="8.8" height="8.3" fill="#e3e3dd" stroke="#d6d6d0" stroke-width="0.6"/><rect x="470.0" y="619.4" width="7.4" height="8.1" fill="#e3e3dd" stroke="#d6d6d0" stroke-width="0.6"/><rect x="480.1" y="617.5" width="5.3" height="6.1" fill="#e3e3dd" stroke="#d6d6d0" stroke-width="0.6"/><rect x="488.6" y="617.4" width="7.5" height="7.8" fill="#e3e3dd" stroke="#d6d6d0" stroke-width="0.6"/><rect x="498.2" y="616.8" width="9.4" height="8.8" fill="#e3e3dd" stroke="#d6d6d0" stroke-width="0.6"/><rect x="512.7" y="619.9" width="7.4" height="5.8" fill="#e3e3dd" stroke="#d6d6d0" stroke-width="0.6"/><rect x="525.1" y="617.7" width="8.8" height="6.9" fill="#e3e3dd" stroke="#d6d6d0" stroke-width="0.6"/><rect x="560.0" y="540.3" width="9.9" height="8.3" fill="#e3e3dd" stroke="#d6d6d0" stroke-width="0.6"/><rect x="573.7" y="541.9" width="5.8" height="8.3" fill="#e3e3dd" stroke="#d6d6d0" stroke-width="0.6"/><rect x="525.0" y="586.1" width="7.3" height="6.0" fill="#e3e3dd" stroke="#d6d6d0" stroke-width="0.6"/><rect x="533.3" y="586.3" width="9.3" height="6.1" fill="#e3e3dd" stroke="#d6d6d0" stroke-width="0.6"/><rect x="546.0" y="585.8" width="7.6" height="7.5" fill="#e3e3dd" stroke="#d6d6d0" stroke-width="0.6"/><rect x="559.2" y="588.6" width="10.1" height="5.2" fill="#e3e3dd" stroke="#d6d6d0" stroke-width="0.6"/><rect x="590.0" y="543.8" width="8.8" height="5.1" fill="#e3e3dd" stroke="#d6d6d0" stroke-width="0.6"/><rect x="603.1" y="541.5" width="6.5" height="5.4" fill="#e3e3dd" stroke="#d6d6d0" stroke-width="0.6"/><rect x="626.5" y="541.6" width="6.0" height="8.6" fill="#e3e3dd" stroke="#d6d6d0" stroke-width="0.6"/><rect x="636.8" y="540.0" width="10.4" height="8.2" fill="#e3e3dd" stroke="#d6d6d0" stroke-width="0.6"/><rect x="651.7" y="542.2" width="8.2" height="8.0" fill="#e3e3dd" stroke="#d6d6d0" stroke-width="0.6"/><rect x="663.6" y="542.0" width="6.6" height="5.9" fill="#e3e3dd" stroke="#d6d6d0" stroke-width="0.6"/><rect x="671.5" y="542.2" width="7.8" height="5.6" fill="#e3e3dd" stroke="#d6d6d0" stroke-width="0.6"/><rect x="683.0" y="542.4" width="10.2" height="5.0" fill="#e3e3dd" stroke="#d6d6d0" stroke-width="0.6"/><rect x="697.0" y="540.6" width="9.0" height="8.4" fill="#e3e3dd" stroke="#d6d6d0" stroke-width="0.6"/><rect x="600.0" y="580.8" width="5.5" height="7.5" fill="#e3e3dd" stroke="#d6d6d0" stroke-width="0.6"/><rect x="609.5" y="583.1" width="9.1" height="8.7" fill="#e3e3dd" stroke="#d6d6d0" stroke-width="0.6"/><rect x="622.1" y="582.4" width="7.9" height="8.6" fill="#e3e3dd" stroke="#d6d6d0" stroke-width="0.6"/><rect x="634.2" y="581.7" width="7.0" height="8.4" fill="#e3e3dd" stroke="#d6d6d0" stroke-width="0.6"/><rect x="644.8" y="582.8" width="9.6" height="5.8" fill="#e3e3dd" stroke="#d6d6d0" stroke-width="0.6"/><rect x="658.2" y="582.6" width="10.0" height="6.2" fill="#e3e3dd" stroke="#d6d6d0" stroke-width="0.6"/><rect x="682.6" y="582.2" width="9.8" height="6.3" fill="#e3e3dd" stroke="#d6d6d0" stroke-width="0.6"/><rect x="599.0" y="618.0" width="5.3" height="6.2" fill="#e3e3dd" stroke="#d6d6d0" stroke-width="0.6"/><rect x="609.9" y="619.4" width="8.7" height="7.6" fill="#e3e3dd" stroke="#d6d6d0" stroke-width="0.6"/><rect x="622.6" y="618.5" width="8.7" height="7.5" fill="#e3e3dd" stroke="#d6d6d0" stroke-width="0.6"/><rect x="635.7" y="619.0" width="6.3" height="7.7" fill="#e3e3dd" stroke="#d6d6d0" stroke-width="0.6"/><rect x="643.5" y="620.7" width="6.1" height="5.1" fill="#e3e3dd" stroke="#d6d6d0" stroke-width="0.6"/><rect x="653.8" y="618.0" width="7.2" height="8.3" fill="#e3e3dd" stroke="#d6d6d0" stroke-width="0.6"/><rect x="663.3" y="618.4" width="6.8" height="6.7" fill="#e3e3dd" stroke="#d6d6d0" stroke-width="0.6"/><rect x="674.4" y="618.0" width="10.6" height="5.2" fill="#e3e3dd" stroke="#d6d6d0" stroke-width="0.6"/><rect x="699.7" y="620.0" width="5.1" height="6.5" fill="#e3e3dd" stroke="#d6d6d0" stroke-width="0.6"/><rect x="725.0" y="485.1" width="7.9" height="6.6" fill="#e3e3dd" stroke="#d6d6d0" stroke-width="0.6"/><rect x="734.9" y="486.0" width="5.9" height="5.1" fill="#e3e3dd" stroke="#d6d6d0" stroke-width="0.6"/><rect x="754.9" y="484.8" width="5.1" height="7.9" fill="#e3e3dd" stroke="#d6d6d0" stroke-width="0.6"/><rect x="761.9" y="485.0" width="5.3" height="8.1" fill="#e3e3dd" stroke="#d6d6d0" stroke-width="0.6"/><rect x="771.9" y="484.1" width="5.5" height="7.5" fill="#e3e3dd" stroke="#d6d6d0" stroke-width="0.6"/><rect x="783.0" y="482.1" width="6.5" height="8.9" fill="#e3e3dd" stroke="#d6d6d0" stroke-width="0.6"/><rect x="790.6" y="483.3" width="8.9" height="8.3" fill="#e3e3dd" stroke="#d6d6d0" stroke-width="0.6"/><rect x="804.2" y="482.5" width="6.0" height="8.4" fill="#e3e3dd" stroke="#d6d6d0" stroke-width="0.6"/><rect x="813.0" y="483.6" width="8.4" height="6.8" fill="#e3e3dd" stroke="#d6d6d0" stroke-width="0.6"/><rect x="826.5" y="484.0" width="7.2" height="7.6" fill="#e3e3dd" stroke="#d6d6d0" stroke-width="0.6"/><rect x="725.0" y="515.0" width="9.7" height="7.3" fill="#e3e3dd" stroke="#d6d6d0" stroke-width="0.6"/><rect x="740.6" y="516.2" width="9.2" height="8.3" fill="#e3e3dd" stroke="#d6d6d0" stroke-width="0.6"/><rect x="755.7" y="516.1" width="10.0" height="7.4" fill="#e3e3dd" stroke="#d6d6d0" stroke-width="0.6"/><rect x="771.1" y="517.3" width="7.3" height="7.7" fill="#e3e3dd" stroke="#d6d6d0" stroke-width="0.6"/><rect x="783.4" y="517.3" width="6.7" height="5.0" fill="#e3e3dd" stroke="#d6d6d0" stroke-width="0.6"/><rect x="794.0" y="516.7" width="9.9" height="8.5" fill="#e3e3dd" stroke="#d6d6d0" stroke-width="0.6"/><rect x="809.0" y="517.4" width="10.2" height="7.3" fill="#e3e3dd" stroke="#d6d6d0" stroke-width="0.6"/><rect x="824.2" y="514.4" width="9.1" height="8.7" fill="#e3e3dd" stroke="#d6d6d0" stroke-width="0.6"/><rect x="725.0" y="544.0" width="9.5" height="8.7" fill="#e3e3dd" stroke="#d6d6d0" stroke-width="0.6"/><rect x="738.9" y="545.8" width="7.8" height="5.8" fill="#e3e3dd" stroke="#d6d6d0" stroke-width="0.6"/><rect x="751.6" y="546.1" width="7.8" height="5.4" fill="#e3e3dd" stroke="#d6d6d0" stroke-width="0.6"/><rect x="773.6" y="543.4" width="7.9" height="7.4" fill="#e3e3dd" stroke="#d6d6d0" stroke-width="0.6"/><rect x="783.4" y="544.5" width="9.2" height="6.5" fill="#e3e3dd" stroke="#d6d6d0" stroke-width="0.6"/><rect x="805.0" y="543.2" width="5.6" height="7.5" fill="#e3e3dd" stroke="#d6d6d0" stroke-width="0.6"/><rect x="814.6" y="543.1" width="7.1" height="7.1" fill="#e3e3dd" stroke="#d6d6d0" stroke-width="0.6"/><rect x="827.6" y="543.8" width="10.2" height="6.9" fill="#e3e3dd" stroke="#d6d6d0" stroke-width="0.6"/><rect x="725.0" y="584.6" width="7.6" height="8.8" fill="#e3e3dd" stroke="#d6d6d0" stroke-width="0.6"/><rect x="738.4" y="584.5" width="6.5" height="5.2" fill="#e3e3dd" stroke="#d6d6d0" stroke-width="0.6"/><rect x="754.9" y="584.0" width="10.7" height="8.6" fill="#e3e3dd" stroke="#d6d6d0" stroke-width="0.6"/><rect x="768.6" y="583.8" width="5.7" height="8.8" fill="#e3e3dd" stroke="#d6d6d0" stroke-width="0.6"/><rect x="778.5" y="584.0" width="10.7" height="7.7" fill="#e3e3dd" stroke="#d6d6d0" stroke-width="0.6"/><rect x="791.0" y="582.1" width="10.8" height="9.0" fill="#e3e3dd" stroke="#d6d6d0" stroke-width="0.6"/><rect x="816.4" y="584.4" width="5.3" height="8.1" fill="#e3e3dd" stroke="#d6d6d0" stroke-width="0.6"/><rect x="827.6" y="586.5" width="5.3" height="5.6" fill="#e3e3dd" stroke="#d6d6d0" stroke-width="0.6"/><rect x="725.0" y="618.6" width="9.5" height="5.4" fill="#e3e3dd" stroke="#d6d6d0" stroke-width="0.6"/><rect x="736.2" y="618.1" width="7.9" height="5.7" fill="#e3e3dd" stroke="#d6d6d0" stroke-width="0.6"/><rect x="748.4" y="616.7" width="5.1" height="7.9" fill="#e3e3dd" stroke="#d6d6d0" stroke-width="0.6"/><rect x="770.9" y="619.9" width="5.8" height="6.8" fill="#e3e3dd" stroke="#d6d6d0" stroke-width="0.6"/><rect x="782.0" y="619.6" width="8.8" height="6.8" fill="#e3e3dd" stroke="#d6d6d0" stroke-width="0.6"/><rect x="794.1" y="617.9" width="8.8" height="5.6" fill="#e3e3dd" stroke="#d6d6d0" stroke-width="0.6"/><rect x="818.1" y="620.2" width="7.5" height="5.6" fill="#e3e3dd" stroke="#d6d6d0" stroke-width="0.6"/><rect x="828.3" y="619.7" width="6.0" height="7.0" fill="#e3e3dd" stroke="#d6d6d0" stroke-width="0.6"/><rect x="855.0" y="479.1" width="10.4" height="7.7" fill="#e3e3dd" stroke="#d6d6d0" stroke-width="0.6"/><rect x="867.8" y="481.6" width="6.5" height="5.8" fill="#e3e3dd" stroke="#d6d6d0" stroke-width="0.6"/><rect x="880.3" y="481.5" width="10.6" height="5.4" fill="#e3e3dd" stroke="#d6d6d0" stroke-width="0.6"/><rect x="902.6" y="478.3" width="9.8" height="6.4" fill="#e3e3dd" stroke="#d6d6d0" stroke-width="0.6"/><rect x="917.6" y="481.4" width="8.2" height="5.7" fill="#e3e3dd" stroke="#d6d6d0" stroke-width="0.6"/><rect x="927.9" y="481.0" width="8.4" height="5.6" fill="#e3e3dd" stroke="#d6d6d0" stroke-width="0.6"/><rect x="855.0" y="515.6" width="5.5" height="7.4" fill="#e3e3dd" stroke="#d6d6d0" stroke-width="0.6"/><rect x="862.6" y="516.3" width="8.7" height="7.8" fill="#e3e3dd" stroke="#d6d6d0" stroke-width="0.6"/><rect x="873.2" y="516.7" width="5.4" height="7.9" fill="#e3e3dd" stroke="#d6d6d0" stroke-width="0.6"/><rect x="879.9" y="517.9" width="9.9" height="6.3" fill="#e3e3dd" stroke="#d6d6d0" stroke-width="0.6"/><rect x="893.2" y="516.8" width="5.1" height="8.6" fill="#e3e3dd" stroke="#d6d6d0" stroke-width="0.6"/><rect x="900.7" y="514.8" width="6.1" height="8.3" fill="#e3e3dd" stroke="#d6d6d0" stroke-width="0.6"/><rect x="909.6" y="517.3" width="8.6" height="5.0" fill="#e3e3dd" stroke="#d6d6d0" stroke-width="0.6"/><rect x="921.8" y="517.2" width="5.7" height="7.9" fill="#e3e3dd" stroke="#d6d6d0" stroke-width="0.6"/><rect x="930.1" y="515.4" width="9.3" height="6.5" fill="#e3e3dd" stroke="#d6d6d0" stroke-width="0.6"/><rect x="855.0" y="545.0" width="8.1" height="7.1" fill="#e3e3dd" stroke="#d6d6d0" stroke-width="0.6"/><rect x="868.9" y="546.4" width="6.3" height="5.7" fill="#e3e3dd" stroke="#d6d6d0" stroke-width="0.6"/><rect x="880.3" y="546.4" width="5.2" height="5.4" fill="#e3e3dd" stroke="#d6d6d0" stroke-width="0.6"/><rect x="886.6" y="547.0" width="8.6" height="7.3" fill="#e3e3dd" stroke="#d6d6d0" stroke-width="0.6"/><rect x="896.7" y="544.9" width="10.2" height="7.9" fill="#e3e3dd" stroke="#d6d6d0" stroke-width="0.6"/><rect x="910.4" y="546.7" width="8.0" height="6.1" fill="#e3e3dd" stroke="#d6d6d0" stroke-width="0.6"/><rect x="920.1" y="546.0" width="8.6" height="8.4" fill="#e3e3dd" stroke="#d6d6d0" stroke-width="0.6"/><rect x="942.3" y="545.5" width="7.5" height="8.4" fill="#e3e3dd" stroke="#d6d6d0" stroke-width="0.6"/><rect x="955.5" y="546.3" width="9.7" height="6.4" fill="#e3e3dd" stroke="#d6d6d0" stroke-width="0.6"/><rect x="855.0" y="582.5" width="10.5" height="8.3" fill="#e3e3dd" stroke="#d6d6d0" stroke-width="0.6"/><rect x="869.1" y="583.4" width="10.7" height="8.7" fill="#e3e3dd" stroke="#d6d6d0" stroke-width="0.6"/><rect x="884.0" y="584.2" width="7.2" height="7.1" fill="#e3e3dd" stroke="#d6d6d0" stroke-width="0.6"/><rect x="904.7" y="585.4" width="10.6" height="7.5" fill="#e3e3dd" stroke="#d6d6d0" stroke-width="0.6"/><rect x="920.7" y="584.8" width="5.2" height="7.6" fill="#e3e3dd" stroke="#d6d6d0" stroke-width="0.6"/><rect x="928.3" y="582.9" width="8.3" height="8.7" fill="#e3e3dd" stroke="#d6d6d0" stroke-width="0.6"/><rect x="855.0" y="617.8" width="6.7" height="6.2" fill="#e3e3dd" stroke="#d6d6d0" stroke-width="0.6"/><rect x="865.7" y="618.4" width="10.7" height="7.1" fill="#e3e3dd" stroke="#d6d6d0" stroke-width="0.6"/><rect x="880.1" y="618.6" width="5.9" height="5.5" fill="#e3e3dd" stroke="#d6d6d0" stroke-width="0.6"/><rect x="889.0" y="619.2" width="6.7" height="6.0" fill="#e3e3dd" stroke="#d6d6d0" stroke-width="0.6"/><rect x="901.0" y="617.5" width="8.7" height="7.3" fill="#e3e3dd" stroke="#d6d6d0" stroke-width="0.6"/><rect x="914.2" y="618.3" width="7.8" height="7.2" fill="#e3e3dd" stroke="#d6d6d0" stroke-width="0.6"/><rect x="924.5" y="618.7" width="6.5" height="5.9" fill="#e3e3dd" stroke="#d6d6d0" stroke-width="0.6"/><rect x="960.0" y="516.3" width="6.7" height="9.0" fill="#e3e3dd" stroke="#d6d6d0" stroke-width="0.6"/><rect x="968.5" y="514.4" width="5.4" height="8.5" fill="#e3e3dd" stroke="#d6d6d0" stroke-width="0.6"/><rect x="976.8" y="515.2" width="7.6" height="7.9" fill="#e3e3dd" stroke="#d6d6d0" stroke-width="0.6"/><rect x="990.3" y="516.7" width="9.4" height="5.6" fill="#e3e3dd" stroke="#d6d6d0" stroke-width="0.6"/><rect x="1004.1" y="515.9" width="8.7" height="8.4" fill="#e3e3dd" stroke="#d6d6d0" stroke-width="0.6"/><rect x="1017.5" y="516.8" width="9.5" height="8.0" fill="#e3e3dd" stroke="#d6d6d0" stroke-width="0.6"/><rect x="1060.0" y="513.3" width="8.0" height="8.9" fill="#e3e3dd" stroke="#d6d6d0" stroke-width="0.6"/><rect x="1072.9" y="514.1" width="10.2" height="7.4" fill="#e3e3dd" stroke="#d6d6d0" stroke-width="0.6"/><rect x="1086.4" y="515.1" width="9.3" height="6.2" fill="#e3e3dd" stroke="#d6d6d0" stroke-width="0.6"/><rect x="1098.7" y="513.9" width="6.9" height="8.1" fill="#e3e3dd" stroke="#d6d6d0" stroke-width="0.6"/><rect x="1108.8" y="515.1" width="6.1" height="6.2" fill="#e3e3dd" stroke="#d6d6d0" stroke-width="0.6"/><rect x="1118.9" y="514.7" width="5.5" height="8.7" fill="#e3e3dd" stroke="#d6d6d0" stroke-width="0.6"/><rect x="1129.6" y="516.3" width="10.8" height="5.8" fill="#e3e3dd" stroke="#d6d6d0" stroke-width="0.6"/><rect x="1141.4" y="515.6" width="5.3" height="7.3" fill="#e3e3dd" stroke="#d6d6d0" stroke-width="0.6"/><rect x="1160.0" y="513.6" width="8.2" height="9.0" fill="#e3e3dd" stroke="#d6d6d0" stroke-width="0.6"/><rect x="1172.7" y="514.3" width="7.3" height="6.4" fill="#e3e3dd" stroke="#d6d6d0" stroke-width="0.6"/><rect x="1185.7" y="514.1" width="9.1" height="7.1" fill="#e3e3dd" stroke="#d6d6d0" stroke-width="0.6"/><rect x="1212.0" y="516.1" width="7.9" height="6.8" fill="#e3e3dd" stroke="#d6d6d0" stroke-width="0.6"/><rect x="1222.6" y="513.3" width="8.2" height="8.3" fill="#e3e3dd" stroke="#d6d6d0" stroke-width="0.6"/><rect x="1236.7" y="515.7" width="10.0" height="7.1" fill="#e3e3dd" stroke="#d6d6d0" stroke-width="0.6"/><rect x="1060.0" y="545.5" width="8.1" height="7.0" fill="#e3e3dd" stroke="#d6d6d0" stroke-width="0.6"/><rect x="1085.0" y="546.1" width="5.3" height="6.6" fill="#e3e3dd" stroke="#d6d6d0" stroke-width="0.6"/><rect x="1094.7" y="547.1" width="5.0" height="6.2" fill="#e3e3dd" stroke="#d6d6d0" stroke-width="0.6"/><rect x="1104.1" y="545.8" width="6.2" height="7.0" fill="#e3e3dd" stroke="#d6d6d0" stroke-width="0.6"/><rect x="1114.5" y="545.2" width="8.2" height="9.0" fill="#e3e3dd" stroke="#d6d6d0" stroke-width="0.6"/><rect x="1124.3" y="544.8" width="5.9" height="8.0" fill="#e3e3dd" stroke="#d6d6d0" stroke-width="0.6"/><rect x="1132.1" y="546.8" width="8.1" height="8.3" fill="#e3e3dd" stroke="#d6d6d0" stroke-width="0.6"/><rect x="1141.5" y="546.6" width="5.1" height="8.1" fill="#e3e3dd" stroke="#d6d6d0" stroke-width="0.6"/><rect x="1160.0" y="545.2" width="5.6" height="8.6" fill="#e3e3dd" stroke="#d6d6d0" stroke-width="0.6"/><rect x="1180.1" y="545.9" width="10.8" height="6.8" fill="#e3e3dd" stroke="#d6d6d0" stroke-width="0.6"/><rect x="1192.1" y="547.0" width="10.6" height="8.4" fill="#e3e3dd" stroke="#d6d6d0" stroke-width="0.6"/><rect x="1218.0" y="547.7" width="10.7" height="6.0" fill="#e3e3dd" stroke="#d6d6d0" stroke-width="0.6"/><rect x="1230.8" y="546.6" width="6.9" height="8.5" fill="#e3e3dd" stroke="#d6d6d0" stroke-width="0.6"/><rect x="1239.9" y="548.2" width="6.0" height="6.4" fill="#e3e3dd" stroke="#d6d6d0" stroke-width="0.6"/><rect x="1248.4" y="546.9" width="8.4" height="5.5" fill="#e3e3dd" stroke="#d6d6d0" stroke-width="0.6"/><rect x="1259.8" y="546.8" width="5.4" height="5.5" fill="#e3e3dd" stroke="#d6d6d0" stroke-width="0.6"/><rect x="1060.0" y="585.0" width="6.4" height="5.1" fill="#e3e3dd" stroke="#d6d6d0" stroke-width="0.6"/><rect x="1068.2" y="586.3" width="9.2" height="5.4" fill="#e3e3dd" stroke="#d6d6d0" stroke-width="0.6"/><rect x="1079.1" y="582.8" width="7.7" height="8.3" fill="#e3e3dd" stroke="#d6d6d0" stroke-width="0.6"/><rect x="1100.9" y="584.3" width="10.7" height="7.0" fill="#e3e3dd" stroke="#d6d6d0" stroke-width="0.6"/><rect x="1126.4" y="584.1" width="7.2" height="6.0" fill="#e3e3dd" stroke="#d6d6d0" stroke-width="0.6"/><rect x="1139.0" y="583.8" width="5.7" height="7.1" fill="#e3e3dd" stroke="#d6d6d0" stroke-width="0.6"/><rect x="1160.0" y="583.6" width="8.4" height="6.2" fill="#e3e3dd" stroke="#d6d6d0" stroke-width="0.6"/><rect x="1170.3" y="583.7" width="10.1" height="6.3" fill="#e3e3dd" stroke="#d6d6d0" stroke-width="0.6"/><rect x="1184.2" y="583.2" width="7.2" height="7.0" fill="#e3e3dd" stroke="#d6d6d0" stroke-width="0.6"/><rect x="1193.9" y="584.6" width="6.4" height="5.5" fill="#e3e3dd" stroke="#d6d6d0" stroke-width="0.6"/><rect x="1219.1" y="585.5" width="5.8" height="6.1" fill="#e3e3dd" stroke="#d6d6d0" stroke-width="0.6"/><rect x="1229.2" y="585.3" width="7.1" height="6.7" fill="#e3e3dd" stroke="#d6d6d0" stroke-width="0.6"/><rect x="1238.5" y="583.8" width="10.1" height="6.4" fill="#e3e3dd" stroke="#d6d6d0" stroke-width="0.6"/><rect x="1250.2" y="582.7" width="10.5" height="7.9" fill="#e3e3dd" stroke="#d6d6d0" stroke-width="0.6"/><rect x="1261.9" y="584.7" width="6.0" height="5.8" fill="#e3e3dd" stroke="#d6d6d0" stroke-width="0.6"/><rect x="960.0" y="618.5" width="6.1" height="8.4" fill="#e3e3dd" stroke="#d6d6d0" stroke-width="0.6"/><rect x="968.4" y="616.6" width="7.6" height="7.7" fill="#e3e3dd" stroke="#d6d6d0" stroke-width="0.6"/><rect x="981.1" y="620.0" width="9.7" height="6.1" fill="#e3e3dd" stroke="#d6d6d0" stroke-width="0.6"/><rect x="994.8" y="619.9" width="5.3" height="6.0" fill="#e3e3dd" stroke="#d6d6d0" stroke-width="0.6"/><rect x="1002.2" y="618.6" width="10.5" height="8.0" fill="#e3e3dd" stroke="#d6d6d0" stroke-width="0.6"/><rect x="1015.6" y="616.6" width="9.5" height="8.3" fill="#e3e3dd" stroke="#d6d6d0" stroke-width="0.6"/><rect x="1030.8" y="618.4" width="7.5" height="8.7" fill="#e3e3dd" stroke="#d6d6d0" stroke-width="0.6"/><rect x="1060.0" y="618.1" width="5.3" height="7.8" fill="#e3e3dd" stroke="#d6d6d0" stroke-width="0.6"/><rect x="1071.0" y="618.6" width="5.8" height="8.0" fill="#e3e3dd" stroke="#d6d6d0" stroke-width="0.6"/><rect x="1092.5" y="618.6" width="8.3" height="6.0" fill="#e3e3dd" stroke="#d6d6d0" stroke-width="0.6"/><rect x="1103.8" y="619.5" width="6.2" height="6.2" fill="#e3e3dd" stroke="#d6d6d0" stroke-width="0.6"/><rect x="1114.4" y="618.9" width="6.4" height="6.0" fill="#e3e3dd" stroke="#d6d6d0" stroke-width="0.6"/><rect x="1135.3" y="619.0" width="8.4" height="6.3" fill="#e3e3dd" stroke="#d6d6d0" stroke-width="0.6"/><rect x="1160.0" y="619.6" width="8.6" height="6.8" fill="#e3e3dd" stroke="#d6d6d0" stroke-width="0.6"/><rect x="1170.2" y="617.5" width="6.7" height="6.4" fill="#e3e3dd" stroke="#d6d6d0" stroke-width="0.6"/><rect x="1179.3" y="616.9" width="6.2" height="7.8" fill="#e3e3dd" stroke="#d6d6d0" stroke-width="0.6"/><rect x="1188.1" y="617.5" width="7.8" height="6.5" fill="#e3e3dd" stroke="#d6d6d0" stroke-width="0.6"/><rect x="1197.0" y="618.7" width="11.0" height="8.0" fill="#e3e3dd" stroke="#d6d6d0" stroke-width="0.6"/><rect x="1213.8" y="619.1" width="8.4" height="5.4" fill="#e3e3dd" stroke="#d6d6d0" stroke-width="0.6"/><rect x="1236.6" y="616.9" width="8.8" height="8.7" fill="#e3e3dd" stroke="#d6d6d0" stroke-width="0.6"/><rect x="1247.6" y="620.5" width="5.8" height="5.1" fill="#e3e3dd" stroke="#d6d6d0" stroke-width="0.6"/><rect x="1256.0" y="619.5" width="6.1" height="7.6" fill="#e3e3dd" stroke="#d6d6d0" stroke-width="0.6"/><rect x="855.0" y="447.8" width="9.5" height="6.3" fill="#e3e3dd" stroke="#d6d6d0" stroke-width="0.6"/><rect x="867.1" y="447.4" width="7.2" height="7.2" fill="#e3e3dd" stroke="#d6d6d0" stroke-width="0.6"/><rect x="876.5" y="447.3" width="5.2" height="7.3" fill="#e3e3dd" stroke="#d6d6d0" stroke-width="0.6"/><rect x="886.2" y="445.6" width="10.4" height="8.8" fill="#e3e3dd" stroke="#d6d6d0" stroke-width="0.6"/><rect x="898.5" y="446.9" width="6.8" height="7.3" fill="#e3e3dd" stroke="#d6d6d0" stroke-width="0.6"/><rect x="907.1" y="444.2" width="7.7" height="8.9" fill="#e3e3dd" stroke="#d6d6d0" stroke-width="0.6"/><rect x="917.9" y="447.1" width="6.1" height="7.9" fill="#e3e3dd" stroke="#d6d6d0" stroke-width="0.6"/><rect x="929.4" y="447.1" width="9.7" height="6.7" fill="#e3e3dd" stroke="#d6d6d0" stroke-width="0.6"/><rect x="177.6" y="211" width="12.8" height="24.3" fill="#ecdcdd" stroke="#d9c5c6" stroke-width="0.7"/><rect x="426.3" y="154.4" width="16.4" height="20.8" fill="#ecdcdd" stroke="#d9c5c6" stroke-width="0.7"/><rect x="425.3" y="190" width="17.4" height="18.7" fill="#ecdcdd" stroke="#d9c5c6" stroke-width="0.7"/><rect x="421" y="208.7" width="21.7" height="15.8" fill="#ecdcdd" stroke="#d9c5c6" stroke-width="0.7"/><rect x="428" y="277" width="12.0" height="7.0" fill="#ecdcdd" stroke="#d9c5c6" stroke-width="0.7"/><rect x="12.2" y="310" width="29.8" height="20.3" fill="#ecdcdd" stroke="#d9c5c6" stroke-width="0.7"/><rect x="51.3" y="309.2" width="26.7" height="11.3" fill="#ecdcdd" stroke="#d9c5c6" stroke-width="0.7"/><rect x="96.3" y="309" width="6.3" height="18.0" fill="#ecdcdd" stroke="#d9c5c6" stroke-width="0.7"/><rect x="102.6" y="317" width="5.0" height="10.0" fill="#ecdcdd" stroke="#d9c5c6" stroke-width="0.7"/><rect x="110" y="311.5" width="6.8" height="19.5" fill="#ecdcdd" stroke="#d9c5c6" stroke-width="0.7"/><rect x="117.4" y="312" width="14.2" height="18.0" fill="#ecdcdd" stroke="#d9c5c6" stroke-width="0.7"/><rect x="0" y="346" width="6.9" height="11.0" fill="#ecdcdd" stroke="#d9c5c6" stroke-width="0.7"/><rect x="16.2" y="344" width="10.4" height="13.0" fill="#ecdcdd" stroke="#d9c5c6" stroke-width="0.7"/><rect x="36" y="345" width="13.3" height="12.5" fill="#ecdcdd" stroke="#d9c5c6" stroke-width="0.7"/><rect x="53.3" y="345" width="7.3" height="12.0" fill="#ecdcdd" stroke="#d9c5c6" stroke-width="0.7"/><rect x="73.4" y="345.7" width="26.3" height="7.9" fill="#ecdcdd" stroke="#d9c5c6" stroke-width="0.7"/><rect x="98" y="372.2" width="37.6" height="20.3" fill="#ecdcdd" stroke="#d9c5c6" stroke-width="0.7"/><rect x="15.8" y="403.3" width="50.9" height="26.3" fill="#ecdcdd" stroke="#d9c5c6" stroke-width="0.7"/><rect x="7.9" y="428" width="8.7" height="8.3" fill="#ecdcdd" stroke="#d9c5c6" stroke-width="0.7"/><rect x="17.4" y="442.8" width="8.3" height="11.9" fill="#ecdcdd" stroke="#d9c5c6" stroke-width="0.7"/><rect x="110" y="412.6" width="27.8" height="19.0" fill="#ecdcdd" stroke="#d9c5c6" stroke-width="0.7"/><rect x="159.5" y="411.5" width="10.2" height="19.5" fill="#ecdcdd" stroke="#d9c5c6" stroke-width="0.7"/><rect x="187" y="411" width="8.0" height="21.7" fill="#ecdcdd" stroke="#d9c5c6" stroke-width="0.7"/><rect x="116.4" y="447.4" width="34.0" height="12.6" fill="#ecdcdd" stroke="#d9c5c6" stroke-width="0.7"/><rect x="159.5" y="443" width="10.2" height="17.0" fill="#ecdcdd" stroke="#d9c5c6" stroke-width="0.7"/><rect x="221" y="294" width="19.0" height="19.0" fill="#ecdcdd" stroke="#d9c5c6" stroke-width="0.7"/><rect x="217" y="336" width="17.5" height="9.5" fill="#ecdcdd" stroke="#d9c5c6" stroke-width="0.7"/><rect x="230.5" y="374.7" width="9.5" height="29.3" fill="#ecdcdd" stroke="#d9c5c6" stroke-width="0.7"/><rect x="221.6" y="294.2" width="23.1" height="19.4" fill="#ecdcdd" stroke="#d9c5c6" stroke-width="0.7"/><rect x="265" y="295" width="10.0" height="21.5" fill="#ecdcdd" stroke="#d9c5c6" stroke-width="0.7"/><rect x="275" y="301" width="16.5" height="15.0" fill="#ecdcdd" stroke="#d9c5c6" stroke-width="0.7"/><rect x="291.5" y="293" width="11.3" height="23.0" fill="#ecdcdd" stroke="#d9c5c6" stroke-width="0.7"/><rect x="313.2" y="295" width="8.5" height="21.0" fill="#ecdcdd" stroke="#d9c5c6" stroke-width="0.7"/><rect x="242" y="330.3" width="53.4" height="11.3" fill="#ecdcdd" stroke="#d9c5c6" stroke-width="0.7"/><rect x="220" y="336.3" width="14.8" height="8.9" fill="#ecdcdd" stroke="#d9c5c6" stroke-width="0.7"/><rect x="296" y="345.2" width="17.8" height="8.2" fill="#ecdcdd" stroke="#d9c5c6" stroke-width="0.7"/><rect x="319.7" y="335.7" width="13.4" height="4.3" fill="#ecdcdd" stroke="#d9c5c6" stroke-width="0.7"/><rect x="328.2" y="344" width="5.3" height="5.0" fill="#ecdcdd" stroke="#d9c5c6" stroke-width="0.7"/><rect x="348.7" y="293" width="9.9" height="23.8" fill="#ecdcdd" stroke="#d9c5c6" stroke-width="0.7"/><rect x="365.5" y="303" width="6.9" height="10.6" fill="#ecdcdd" stroke="#d9c5c6" stroke-width="0.7"/><rect x="387.4" y="298.4" width="13.2" height="15.2" fill="#ecdcdd" stroke="#d9c5c6" stroke-width="0.7"/><rect x="417.4" y="296" width="6.0" height="20.5" fill="#ecdcdd" stroke="#d9c5c6" stroke-width="0.7"/><rect x="347.3" y="330.3" width="24.7" height="13.9" fill="#ecdcdd" stroke="#d9c5c6" stroke-width="0.7"/><rect x="375" y="330" width="24.7" height="15.0" fill="#ecdcdd" stroke="#d9c5c6" stroke-width="0.7"/><rect x="411.5" y="330" width="17.8" height="27.0" fill="#ecdcdd" stroke="#d9c5c6" stroke-width="0.7"/><rect x="230.3" y="374.8" width="24.3" height="29.6" fill="#ecdcdd" stroke="#d9c5c6" stroke-width="0.7"/><rect x="278.2" y="375.8" width="13.3" height="21.7" fill="#ecdcdd" stroke="#d9c5c6" stroke-width="0.7"/><rect x="338.5" y="398" width="6.3" height="8.5" fill="#ecdcdd" stroke="#d9c5c6" stroke-width="0.7"/><rect x="420.4" y="376.5" width="14.4" height="8.2" fill="#ecdcdd" stroke="#d9c5c6" stroke-width="0.7"/><rect x="248.2" y="424" width="32.0" height="18.9" fill="#ecdcdd" stroke="#d9c5c6" stroke-width="0.7"/><rect x="284.2" y="428.6" width="11.8" height="14.3" fill="#ecdcdd" stroke="#d9c5c6" stroke-width="0.7"/><rect x="296" y="429" width="9.3" height="26.0" fill="#ecdcdd" stroke="#d9c5c6" stroke-width="0.7"/><rect x="348" y="429.3" width="13.8" height="22.5" fill="#ecdcdd" stroke="#d9c5c6" stroke-width="0.7"/><rect x="369" y="425.5" width="34.6" height="17.5" fill="#ecdcdd" stroke="#d9c5c6" stroke-width="0.7"/><rect x="403.6" y="407.6" width="8.9" height="37.4" fill="#ecdcdd" stroke="#d9c5c6" stroke-width="0.7"/><rect x="412.5" y="406.4" width="12.0" height="25.6" fill="#ecdcdd" stroke="#d9c5c6" stroke-width="0.7"/><rect x="414" y="445" width="16.0" height="10.0" fill="#ecdcdd" stroke="#d9c5c6" stroke-width="0.7"/><rect x="551.8" y="266.4" width="10.9" height="19.3" fill="#ecdcdd" stroke="#d9c5c6" stroke-width="0.7"/><rect x="564.2" y="272.4" width="13.7" height="17.6" fill="#ecdcdd" stroke="#d9c5c6" stroke-width="0.7"/><rect x="591.3" y="266" width="15.7" height="20.0" fill="#ecdcdd" stroke="#d9c5c6" stroke-width="0.7"/><rect x="688.6" y="265.5" width="10.3" height="18.5" fill="#ecdcdd" stroke="#d9c5c6" stroke-width="0.7"/><rect x="474.2" y="294.8" width="6.5" height="22.7" fill="#ecdcdd" stroke="#d9c5c6" stroke-width="0.7"/><rect x="480.7" y="298.8" width="21.7" height="9.8" fill="#ecdcdd" stroke="#d9c5c6" stroke-width="0.7"/><rect x="521.2" y="295.4" width="10.3" height="22.1" fill="#ecdcdd" stroke="#d9c5c6" stroke-width="0.7"/><rect x="534.6" y="302.7" width="14.2" height="14.8" fill="#ecdcdd" stroke="#d9c5c6" stroke-width="0.7"/><rect x="476" y="340" width="6.0" height="8.0" fill="#ecdcdd" stroke="#d9c5c6" stroke-width="0.7"/><rect x="485.7" y="330.3" width="17.3" height="22.4" fill="#ecdcdd" stroke="#d9c5c6" stroke-width="0.7"/><rect x="511" y="331" width="21.7" height="13.8" fill="#ecdcdd" stroke="#d9c5c6" stroke-width="0.7"/><rect x="595.2" y="337.3" width="33.6" height="11.4" fill="#ecdcdd" stroke="#d9c5c6" stroke-width="0.7"/><rect x="466.3" y="374.4" width="13.4" height="9.2" fill="#ecdcdd" stroke="#d9c5c6" stroke-width="0.7"/><rect x="503" y="375" width="17.6" height="7.6" fill="#ecdcdd" stroke="#d9c5c6" stroke-width="0.7"/><rect x="522.2" y="375" width="21.8" height="6.0" fill="#ecdcdd" stroke="#d9c5c6" stroke-width="0.7"/><rect x="547.3" y="375" width="30.7" height="10.7" fill="#ecdcdd" stroke="#d9c5c6" stroke-width="0.7"/><rect x="591.3" y="376" width="13.8" height="11.4" fill="#ecdcdd" stroke="#d9c5c6" stroke-width="0.7"/><rect x="631.4" y="378" width="13.6" height="9.0" fill="#ecdcdd" stroke="#d9c5c6" stroke-width="0.7"/><rect x="653" y="380.5" width="14.0" height="6.3" fill="#ecdcdd" stroke="#d9c5c6" stroke-width="0.7"/><rect x="671.3" y="371.2" width="38.4" height="16.4" fill="#ecdcdd" stroke="#d9c5c6" stroke-width="0.7"/><rect x="486.7" y="402" width="20.7" height="32.4" fill="#ecdcdd" stroke="#d9c5c6" stroke-width="0.7"/><rect x="517.8" y="400" width="11.7" height="13.3" fill="#ecdcdd" stroke="#d9c5c6" stroke-width="0.7"/><rect x="543.3" y="419.2" width="34.7" height="30.2" fill="#ecdcdd" stroke="#d9c5c6" stroke-width="0.7"/><rect x="623.5" y="400.8" width="13.2" height="26.9" fill="#ecdcdd" stroke="#d9c5c6" stroke-width="0.7"/><rect x="674.2" y="399.4" width="29.6" height="28.3" fill="#ecdcdd" stroke="#d9c5c6" stroke-width="0.7"/><rect x="595.2" y="192" width="22.8" height="10.4" fill="#ecdcdd" stroke="#d9c5c6" stroke-width="0.7"/><rect x="596.2" y="206.3" width="19.8" height="8.3" fill="#ecdcdd" stroke="#d9c5c6" stroke-width="0.7"/><rect x="723.3" y="118.3" width="31.0" height="48.0" fill="#ecdcdd" stroke="#d9c5c6" stroke-width="0.7"/><rect x="764.2" y="119" width="10.4" height="18.0" fill="#ecdcdd" stroke="#d9c5c6" stroke-width="0.7"/><rect x="783" y="119" width="6.8" height="9.0" fill="#ecdcdd" stroke="#d9c5c6" stroke-width="0.7"/><rect x="791.2" y="118.5" width="9.5" height="10.2" fill="#ecdcdd" stroke="#d9c5c6" stroke-width="0.7"/><rect x="855" y="133.3" width="19.7" height="11.3" fill="#ecdcdd" stroke="#d9c5c6" stroke-width="0.7"/><rect x="857" y="161.3" width="33.5" height="9.9" fill="#ecdcdd" stroke="#d9c5c6" stroke-width="0.7"/><rect x="907.3" y="121.5" width="21.3" height="19.1" fill="#ecdcdd" stroke="#d9c5c6" stroke-width="0.7"/><rect x="936" y="121.5" width="9.2" height="9.0" fill="#ecdcdd" stroke="#d9c5c6" stroke-width="0.7"/><rect x="723.3" y="201.2" width="24.1" height="21.3" fill="#ecdcdd" stroke="#d9c5c6" stroke-width="0.7"/><rect x="735" y="222" width="15.0" height="20.0" fill="#ecdcdd" stroke="#d9c5c6" stroke-width="0.7"/><rect x="905.3" y="192" width="17.4" height="22.6" fill="#ecdcdd" stroke="#d9c5c6" stroke-width="0.7"/><rect x="952.3" y="203" width="31.5" height="22.4" fill="#ecdcdd" stroke="#d9c5c6" stroke-width="0.7"/><rect x="759.4" y="297" width="43.1" height="11.5" fill="#ecdcdd" stroke="#d9c5c6" stroke-width="0.7"/><rect x="854.6" y="284.2" width="66.2" height="11.2" fill="#ecdcdd" stroke="#d9c5c6" stroke-width="0.7"/><rect x="898" y="273" width="22.8" height="22.4" fill="#ecdcdd" stroke="#d9c5c6" stroke-width="0.7"/><rect x="932.3" y="279.4" width="27.7" height="12.5" fill="#ecdcdd" stroke="#d9c5c6" stroke-width="0.7"/><rect x="734.4" y="400.2" width="35.4" height="25.0" fill="#ecdcdd" stroke="#d9c5c6" stroke-width="0.7"/><rect x="736.5" y="377" width="45.5" height="9.0" fill="#ecdcdd" stroke="#d9c5c6" stroke-width="0.7"/><rect x="972.2" y="120.3" width="26.6" height="25.2" fill="#ecdcdd" stroke="#d9c5c6" stroke-width="0.7"/><rect x="998.8" y="120" width="14.6" height="22.0" fill="#ecdcdd" stroke="#d9c5c6" stroke-width="0.7"/><rect x="1013.4" y="120" width="8.5" height="22.0" fill="#ecdcdd" stroke="#d9c5c6" stroke-width="0.7"/><rect x="1021.9" y="120" width="6.1" height="18.0" fill="#ecdcdd" stroke="#d9c5c6" stroke-width="0.7"/><rect x="1028" y="121" width="6.5" height="19.0" fill="#ecdcdd" stroke="#d9c5c6" stroke-width="0.7"/><rect x="1035" y="135" width="13.0" height="10.0" fill="#ecdcdd" stroke="#d9c5c6" stroke-width="0.7"/><rect x="1063.3" y="120" width="12.5" height="25.0" fill="#ecdcdd" stroke="#d9c5c6" stroke-width="0.7"/><rect x="1100.8" y="124" width="8.9" height="21.0" fill="#ecdcdd" stroke="#d9c5c6" stroke-width="0.7"/><rect x="1163" y="127" width="8.0" height="15.0" fill="#ecdcdd" stroke="#d9c5c6" stroke-width="0.7"/><rect x="1161" y="120" width="21.7" height="10.0" fill="#ecdcdd" stroke="#d9c5c6" stroke-width="0.7"/><rect x="1172" y="130" width="10.7" height="9.0" fill="#ecdcdd" stroke="#d9c5c6" stroke-width="0.7"/><rect x="1188.2" y="120.8" width="14.6" height="13.9" fill="#ecdcdd" stroke="#d9c5c6" stroke-width="0.7"/><rect x="1228" y="120" width="8.0" height="26.0" fill="#ecdcdd" stroke="#d9c5c6" stroke-width="0.7"/><rect x="1245.4" y="121" width="14.3" height="14.0" fill="#ecdcdd" stroke="#d9c5c6" stroke-width="0.7"/><rect x="972.2" y="150.4" width="26.6" height="17.8" fill="#ecdcdd" stroke="#d9c5c6" stroke-width="0.7"/><rect x="998.2" y="195.2" width="8.5" height="42.1" fill="#ecdcdd" stroke="#d9c5c6" stroke-width="0.7"/><rect x="1024" y="206.3" width="16.0" height="32.9" fill="#ecdcdd" stroke="#d9c5c6" stroke-width="0.7"/><rect x="1016" y="214" width="42.4" height="14.0" fill="#ecdcdd" stroke="#d9c5c6" stroke-width="0.7"/><rect x="1240" y="313.3" width="26.0" height="12.5" fill="#ecdcdd" stroke="#d9c5c6" stroke-width="0.7"/><rect x="1264" y="276" width="12.0" height="18.0" fill="#ecdcdd" stroke="#d9c5c6" stroke-width="0.7"/><rect x="1185.4" y="270" width="7.1" height="12.0" fill="#ecdcdd" stroke="#d9c5c6" stroke-width="0.7"/><rect x="990" y="273" width="22.0" height="20.0" fill="#ecdcdd" stroke="#d9c5c6" stroke-width="0.7"/><rect x="1022" y="273" width="23.0" height="17.0" fill="#ecdcdd" stroke="#d9c5c6" stroke-width="0.7"/><rect x="1240" y="272" width="10.0" height="18.0" fill="#ecdcdd" stroke="#d9c5c6" stroke-width="0.7"/><path d="M855 190 L885 190 L890 198 L890 215 L906.3 215 L906.3 230 L868 230 L868 241.3 L855 241.3 Z" fill="#ecdcdd" stroke="#d9c5c6" stroke-width="0.7"/><path d="M517 119 L678 119 L678 189 L705 189 L708 195 L708 238 L702 242 L657 242 L655 237 L643 235 L643 195 L628 179 L575 179 L575 189 L517 189 Z" fill="#ecdcdd" stroke="#d9c5c6" stroke-width="0.7"/><path d="M474 112.4 L513 112.4 L517.3 117 L517.3 190 L513 195 L474 195 L469.5 190 L469.5 117 Z" fill="#ecdcdd" stroke="#d9c5c6" stroke-width="0.7"/><rect x="814" y="283" width="16" height="16" transform="rotate(40 822 291)" fill="#ecdcdd" stroke="#d9c5c6" stroke-width="0.7"/><rect x="525" y="272" width="17" height="8" transform="rotate(38 533 276)" fill="#ecdcdd" stroke="#d9c5c6" stroke-width="0.7"/><rect x="27.6" y="175" width="9.9" height="17.5" fill="#e6e0f0" stroke="#cec6dc" stroke-width="0.7"/><rect x="46.4" y="179" width="34.1" height="23.0" fill="#e6e0f0" stroke="#cec6dc" stroke-width="0.7"/><rect x="68" y="179" width="12.5" height="64.2" fill="#e6e0f0" stroke="#cec6dc" stroke-width="0.7"/><rect x="46.4" y="231" width="34.1" height="12.2" fill="#e6e0f0" stroke="#cec6dc" stroke-width="0.7"/><rect x="23.3" y="224" width="19.1" height="26.5" fill="#e6e0f0" stroke="#cec6dc" stroke-width="0.7"/><rect x="127.3" y="180" width="14.4" height="6.6" fill="#e6e0f0" stroke="#cec6dc" stroke-width="0.7"/><rect x="224" y="121.8" width="16.0" height="48.4" fill="#e6e0f0" stroke="#cec6dc" stroke-width="0.7"/><rect x="678.8" y="118.3" width="30.9" height="56.9" fill="#e6e0f0" stroke="#cec6dc" stroke-width="0.7"/><rect x="615.6" y="228.5" width="6.7" height="14.2" fill="#e6e0f0" stroke="#cec6dc" stroke-width="0.7"/><path d="M227 123 L292.7 123 L292.7 145.5 L267.4 145.5 L267.4 169.2 L223.6 169.2 L223.6 147 L227 147 Z" fill="#e6e0f0" stroke="#cec6dc" stroke-width="0.7"/><rect x="227" y="275" width="13.0" height="7.0" fill="#dfe3f3" stroke="#c9cde0" stroke-width="0.7"/><path d="M803 118.9 L841.6 118.9 L841.6 153.4 L813.5 153.4 L813.5 130.6 L803 130.6 Z" fill="#d8ebe6" stroke="#bcd6cf" stroke-width="0.7"/><rect x="183.5" y="195.3" width="15.8" height="11.0" fill="#ebedd3" stroke="#d6d9b8" stroke-width="0.7"/><path d="M754.6 436.7 L760 436.7 L760 442 L765.6 442 L765.6 453.3 L754.6 453.3 Z" fill="#ebedd3" stroke="#d6d9b8" stroke-width="0.7"/><rect x="854.2" y="378.3" width="52.5" height="8.4" fill="#f0e5dd" stroke="#ddd0c6" stroke-width="0.7"/><rect x="776" y="409.2" width="11.5" height="9.1" fill="#f0e5dd" stroke="#ddd0c6" stroke-width="0.7"/><rect x="965" y="480" width="8.0" height="10.0" fill="#e3e3dd" stroke="#d3d3cd" stroke-width="0.7"/><rect x="369" y="192.5" width="15.9" height="17.2" fill="#e3e3dd" stroke="#d3d3cd" stroke-width="0.7"/><rect x="1100.2" y="154.4" width="34.6" height="37.5" fill="#e3e3dd" stroke="#d3d3cd" stroke-width="0.7"/><rect x="1076" y="220.5" width="9.6" height="20.7" fill="#e3e3dd" stroke="#d3d3cd" stroke-width="0.7"/><rect x="603.1" y="439" width="11.9" height="14.7" fill="#e3e3dd" stroke="#d3d3cd" stroke-width="0.7"/><rect x="818" y="437" width="18.5" height="18.0" fill="#e3e3dd" stroke="#d3d3cd" stroke-width="0.7"/><rect x="487" y="522" width="18.6" height="28.0" fill="#e3e3dd" stroke="#d3d3cd" stroke-width="0.7"/><rect x="636" y="473" width="33.5" height="11.0" fill="#e3e3dd" stroke="#d3d3cd" stroke-width="0.7"/><rect x="488" y="608" width="20.0" height="17.0" fill="#e3e3dd" stroke="#d3d3cd" stroke-width="0.7"/><rect x="598" y="497" width="22.0" height="15.0" fill="#e3e3dd" stroke="#d3d3cd" stroke-width="0.7"/><rect x="760" y="498" width="15.0" height="14.0" fill="#e3e3dd" stroke="#d3d3cd" stroke-width="0.7"/><rect x="823" y="478" width="15.0" height="14.0" fill="#e3e3dd" stroke="#d3d3cd" stroke-width="0.7"/><rect x="505" y="570" width="7.0" height="20.0" fill="#e3e3dd" stroke="#d3d3cd" stroke-width="0.7"/><path d="M979.6 542.2 H1047.9 V598 H944.5 V572.6 H979.6 Z" fill="#d5e4c0"/><path d="M0 366.5 L447 368.8" stroke="#e7e7e2" stroke-width="3" fill="none"/><path d="M0 366.5 L447 368.8" fill="none" stroke="#d2d2ce" stroke-width="1.1" stroke-dasharray="6 4"/><path d="M0 367 L93 358" fill="none" stroke="#d6d6d2" stroke-width="1" stroke-dasharray="5 3"/><path d="M466 370.8 C520 360 550 340 586 331 C620 322 660 319 716 318" stroke="#dcdcd8" stroke-width="2" fill="none"/><path d="M466 200 Q478 222 492 242" stroke="#dcdcd8" stroke-width="1.5" fill="none"/><path d="M515 272 Q545 305 586 316 Q630 320 716 317" stroke="#dcdcd8" stroke-width="2" fill="none"/><path d="M716 317.0 C790 317.0 850 317.0 940 323.0 L1276 377.0" stroke="#e7e7e2" stroke-width="3.2" fill="none"/><path d="M716 321.3 C790 321.3 850 324.5 940 330.5 L1276 385.2" stroke="#e7e7e2" stroke-width="3.2" fill="none"/><path d="M716 325.6 C790 325.6 850 332.0 940 338.0 L1276 393.4" stroke="#e7e7e2" stroke-width="3.2" fill="none"/><path d="M716 329.9 C790 329.9 850 339.5 940 345.5 L1276 401.6" stroke="#e7e7e2" stroke-width="3.2" fill="none"/><path d="M716 329.9 C790 329.9 850 347.0 940 353.0 L1276 409.8" stroke="#e7e7e2" stroke-width="3.2" fill="none"/><path d="M716 329.9 C790 329.9 850 354.5 940 360.5 L1276 418.0" stroke="#e7e7e2" stroke-width="3.2" fill="none"/><path d="M716 317.0 C790 317.0 850 317.0 940 323.0 L1276 377.0" fill="none" stroke="#d2d2ce" stroke-width="1.1" stroke-dasharray="7 5"/><path d="M716 321.3 C790 321.3 850 324.5 940 330.5 L1276 385.2" fill="none" stroke="#d2d2ce" stroke-width="1.1" stroke-dasharray="7 5"/><path d="M716 325.6 C790 325.6 850 332.0 940 338.0 L1276 393.4" fill="none" stroke="#d2d2ce" stroke-width="1.1" stroke-dasharray="7 5"/><path d="M716 329.9 C790 329.9 850 339.5 940 345.5 L1276 401.6" fill="none" stroke="#d2d2ce" stroke-width="1.1" stroke-dasharray="7 5"/><path d="M716 329.9 C790 329.9 850 347.0 940 353.0 L1276 409.8" fill="none" stroke="#d2d2ce" stroke-width="1.1" stroke-dasharray="7 5"/><path d="M716 329.9 C790 329.9 850 354.5 940 360.5 L1276 418.0" fill="none" stroke="#d2d2ce" stroke-width="1.1" stroke-dasharray="7 5"/><path d="M883 321 C900 318 920 313 940 309.6 L992 299.2 L1127.5 299 C1160 303 1185 312 1200 319 L1276 365.8" stroke="#e7e7e2" stroke-width="3" fill="none"/><path d="M883 321 C900 318 920 313 940 309.6 L992 299.2 L1127.5 299 C1160 303 1185 312 1200 319 L1276 365.8" fill="none" stroke="#cdcdc9" stroke-width="1" stroke-dasharray="5 3"/><path d="M951.5 316.9 L1031.7 316.9 L1148 311.7" fill="none" stroke="#cdcdc9" stroke-width="1" stroke-dasharray="5 3"/><path d="M951.5 314.9 L1031.7 314.9" fill="none" stroke="#d3d3cf" stroke-width="1" stroke-dasharray="5 3"/><path d="M1078.5 425.2 L1196.3 425 L1276 415.8" stroke="#e7e7e2" stroke-width="4" fill="none"/><path d="M1078.5 425.2 L1196.3 425 L1276 415.8" fill="none" stroke="#cdcdc9" stroke-width="1" stroke-dasharray="5 3"/><path d="M1078.5 422.2 L1196.3 422 L1276 412.8" fill="none" stroke="#cdcdc9" stroke-width="1" stroke-dasharray="5 3"/><path d="M-5 135.7 H195 C206 135.7 212 116 232 115 H447" fill="none" stroke="#fdfdfc" stroke-width="3.6" stroke-linejoin="round"/><path d="M117.4 111 V266" fill="none" stroke="#fdfdfc" stroke-width="3.6" stroke-linejoin="round"/><path d="M212 111 V640" fill="none" stroke="#fdfdfc" stroke-width="3.6" stroke-linejoin="round"/><path d="M-5 266 H160 C180 266 200 253.5 232 253 H447" fill="none" stroke="#fdfdfc" stroke-width="3.6" stroke-linejoin="round"/><path d="M-5 165 L45.4 168.7" fill="none" stroke="#fdfdfc" stroke-width="3.6" stroke-linejoin="round"/><path d="M-5 196.8 H21.7" fill="none" stroke="#fdfdfc" stroke-width="3.6" stroke-linejoin="round"/><path d="M212 181.5 H447" fill="none" stroke="#fdfdfc" stroke-width="3.6" stroke-linejoin="round"/><path d="M212 216.6 H404.6 V250" fill="none" stroke="#fdfdfc" stroke-width="3.6" stroke-linejoin="round"/><path d="M274.3 180 V149.5 H447" fill="none" stroke="#fdfdfc" stroke-width="3.6" stroke-linejoin="round"/><path d="M343 111 V352 Q343 360.5 335 360.8 L212 361.5" fill="none" stroke="#fdfdfc" stroke-width="3.6" stroke-linejoin="round"/><path d="M449.5 215 V228 Q449.5 250 426 251.5" fill="none" stroke="#fdfdfc" stroke-width="3.6" stroke-linejoin="round"/><path d="M212 326.5 L447 323" fill="none" stroke="#fdfdfc" stroke-width="3.6" stroke-linejoin="round"/><path d="M212 288.9 H447" fill="none" stroke="#fdfdfc" stroke-width="3.6" stroke-linejoin="round"/><path d="M-5 305.3 H212" fill="none" stroke="#fdfdfc" stroke-width="3.6" stroke-linejoin="round"/><path d="M-5 338.2 H212" fill="none" stroke="#fdfdfc" stroke-width="3.6" stroke-linejoin="round"/><path d="M101.6 466 V410 Q101.6 404.3 107 404.3 H212" fill="none" stroke="#fdfdfc" stroke-width="3.6" stroke-linejoin="round"/><path d="M157.3 404.3 V640" fill="none" stroke="#fdfdfc" stroke-width="3.6" stroke-linejoin="round"/><path d="M101.6 435 H212" fill="none" stroke="#fdfdfc" stroke-width="3.6" stroke-linejoin="round"/><path d="M212 415.2 H378 C390 415.2 397 408 397.7 401 Q398 394.5 410 394.5 H447" fill="none" stroke="#fdfdfc" stroke-width="3.6" stroke-linejoin="round"/><path d="M-5 466.2 L335 464 Q340.7 464 340.7 470 V640" fill="none" stroke="#fdfdfc" stroke-width="3.6" stroke-linejoin="round"/><path d="M-5 500 H212" fill="none" stroke="#fdfdfc" stroke-width="3.6" stroke-linejoin="round"/><path d="M-5 533 L447 534.5" fill="none" stroke="#fdfdfc" stroke-width="3.6" stroke-linejoin="round"/><path d="M-5 568.6 H57" fill="none" stroke="#fdfdfc" stroke-width="3.6" stroke-linejoin="round"/><path d="M-5 605 L447 604.7" fill="none" stroke="#fdfdfc" stroke-width="3.6" stroke-linejoin="round"/><path d="M466 113.4 H1276" fill="none" stroke="#fdfdfc" stroke-width="3.6" stroke-linejoin="round"/><path d="M716.8 111 V244" fill="none" stroke="#fdfdfc" stroke-width="3.6" stroke-linejoin="round"/><path d="M847.7 111 V244" fill="none" stroke="#fdfdfc" stroke-width="3.6" stroke-linejoin="round"/><path d="M953 111 V184.6" fill="none" stroke="#fdfdfc" stroke-width="3.6" stroke-linejoin="round"/><path d="M953 147.5 H1276" fill="none" stroke="#fdfdfc" stroke-width="3.6" stroke-linejoin="round"/><path d="M1056.4 111 V147.5" fill="none" stroke="#fdfdfc" stroke-width="3.6" stroke-linejoin="round"/><path d="M1153.7 111 V147.5" fill="none" stroke="#fdfdfc" stroke-width="3.6" stroke-linejoin="round"/><path d="M672 184.6 H1276" fill="none" stroke="#fdfdfc" stroke-width="3.6" stroke-linejoin="round"/><path d="M584.8 244 V197 Q584.8 187 595 187 H618.8 Q628.8 187 628.8 197 V244" fill="none" stroke="#fdfdfc" stroke-width="3.6" stroke-linejoin="round"/><path d="M584 263 V640" fill="none" stroke="#fdfdfc" stroke-width="3.6" stroke-linejoin="round"/><path d="M716 263 V442" fill="none" stroke="#fdfdfc" stroke-width="3.6" stroke-linejoin="round"/><path d="M466 323.4 H584" fill="none" stroke="#fdfdfc" stroke-width="3.6" stroke-linejoin="round"/><path d="M500.5 373.2 H584" fill="none" stroke="#fdfdfc" stroke-width="3.6" stroke-linejoin="round"/><path d="M466 393.5 H1046 Q1055.6 394 1055.6 404 V640" fill="none" stroke="#fdfdfc" stroke-width="3.6" stroke-linejoin="round"/><path d="M847.5 394 V640" fill="none" stroke="#fdfdfc" stroke-width="3.6" stroke-linejoin="round"/><path d="M847.5 428.75 H1056" fill="none" stroke="#fdfdfc" stroke-width="3.6" stroke-linejoin="round"/><path d="M953.5 394 V533" fill="none" stroke="#fdfdfc" stroke-width="3.6" stroke-linejoin="round"/><path d="M518 465.5 L700 462.7 L953 464.7 L1276 466.5" fill="none" stroke="#fdfdfc" stroke-width="3.6" stroke-linejoin="round"/><path d="M518.8 492.5 V603.5" fill="none" stroke="#fdfdfc" stroke-width="3.6" stroke-linejoin="round"/><path d="M466 533.5 L953 533.5 L1276 535.7" fill="none" stroke="#fdfdfc" stroke-width="3.6" stroke-linejoin="round"/><path d="M547.6 533.7 V603.5" fill="none" stroke="#fdfdfc" stroke-width="3.6" stroke-linejoin="round"/><path d="M583 568 H782.5" fill="none" stroke="#fdfdfc" stroke-width="3.6" stroke-linejoin="round"/><path d="M466 604 H1276" fill="none" stroke="#fdfdfc" stroke-width="3.6" stroke-linejoin="round"/><path d="M754 503.6 Q780 499 818 497.8 L953 501.2" fill="none" stroke="#fdfdfc" stroke-width="3.6" stroke-linejoin="round"/><path d="M851 570.4 H972 Q977.5 570 977.5 564 V535.7" fill="none" stroke="#fdfdfc" stroke-width="3.6" stroke-linejoin="round"/><path d="M1152.6 464.7 V640" fill="none" stroke="#fdfdfc" stroke-width="3.6" stroke-linejoin="round"/><path d="M1056 571 H1276" fill="none" stroke="#fdfdfc" stroke-width="3.6" stroke-linejoin="round"/><path d="M716.4 560 V640" fill="none" stroke="#fdfdfc" stroke-width="3.6" stroke-linejoin="round"/><path d="M715.6 442 L705.8 461.6 L681.6 485.8 Q670 500 675 514.2 Q679 531.3 695 531.3 H738 Q752 531 755 520.8 Q758 505 747.4 483.6 L727.7 460.5 Z" fill="none" stroke="#fdfdfc" stroke-width="3.6" stroke-linejoin="round"/><path d="M660.8 462.7 L681.6 485.8" fill="none" stroke="#fdfdfc" stroke-width="3.6" stroke-linejoin="round"/><path d="M759.5 462.7 L748.5 483.6" fill="none" stroke="#fdfdfc" stroke-width="3.6" stroke-linejoin="round"/><path d="M662 532.9 L672.9 518.6" fill="none" stroke="#fdfdfc" stroke-width="3.6" stroke-linejoin="round"/><path d="M765 532.9 L755 519.7" fill="none" stroke="#fdfdfc" stroke-width="3.6" stroke-linejoin="round"/><path d="M689.3 533 L715.6 560.3 L735.3 533" fill="none" stroke="#fdfdfc" stroke-width="3.6" stroke-linejoin="round"/><path d="M754 504 L818 497.5" fill="none" stroke="#fdfdfc" stroke-width="3.6" stroke-linejoin="round"/><rect x="448" y="111" width="17" height="134" fill="#fdfdfc"/><rect x="456" y="111" width="2.2" height="134" fill="#f1f1ee"/><path d="M1276 244 H451.5 Q448.2 244 448.2 247.5 V640 H466 V274 Q466 263.2 477 263.2 H1276 Z" fill="#d6d6d4" stroke="#c3c3c1" stroke-width="1.2"/><path d="M1276 253.6 H464" fill="none" stroke="#ececea" stroke-width="1.6"/><path d="M457.1 266 V640" fill="none" stroke="#e6e6e4" stroke-width="1.4"/><path d="M1276 247.2 H452 M1276 260.2 H470" fill="none" stroke="#d0d0ce" stroke-width="0.8"/><path d="M451.8 250 V640 M462.5 272 V640" fill="none" stroke="#d0d0ce" stroke-width="0.8"/><path d="M586.8 239.5 Q594.3 237.5 601.8 239.5 Q603.3 240.0 603.3 242.5 V249.5 Q603.3 254.5 594.3 258.0 Q585.3 254.5 585.3 249.5 V242.5 Q585.3 240.0 586.8 239.5 Z" fill="#fff" stroke="#777" stroke-width="1"/><text x="594.3" y="252.5" text-anchor="middle" font-family="Liberation Sans" font-size="10.5" fill="#333">3</text><path d="M959.7 239 Q967.2 237 974.7 239 Q976.2 239.5 976.2 242 V249 Q976.2 254 967.2 257.5 Q958.2 254 958.2 249 V242 Q958.2 239.5 959.7 239 Z" fill="#fff" stroke="#777" stroke-width="1"/><text x="967.2" y="252" text-anchor="middle" font-family="Liberation Sans" font-size="10.5" fill="#333">3</text><path d="M444.1 500.5 Q451.6 498.5 459.1 500.5 Q460.6 501.0 460.6 503.5 V510.5 Q460.6 515.5 451.6 519.0 Q442.6 515.5 442.6 510.5 V503.5 Q442.6 501.0 444.1 500.5 Z" fill="#fff" stroke="#777" stroke-width="1"/><text x="451.6" y="513.5" text-anchor="middle" font-family="Liberation Sans" font-size="10.5" fill="#333">2</text><text x="309.8" y="118.3" text-anchor="middle" font-family="Liberation Sans" font-size="11" font-weight="400" letter-spacing="0.05" fill="#505050" stroke="#505050" stroke-width="0.12">13th St W</text><text x="411.5" y="133.7" text-anchor="middle" font-family="Liberation Sans" font-size="11" font-weight="400" letter-spacing="0.05" fill="#505050" stroke="#505050" stroke-width="0.12">Columbian</text><text x="411.5" y="145.2" text-anchor="middle" font-family="Liberation Sans" font-size="11" font-weight="400" letter-spacing="0.05" fill="#505050" stroke="#505050" stroke-width="0.12">Centre</text><text x="181.6" y="177.2" text-anchor="middle" font-family="Liberation Sans" font-size="11" font-weight="400" letter-spacing="0.05" fill="#505050" stroke="#505050" stroke-width="0.12">Sacred Heart</text><text x="181.6" y="188.6" text-anchor="middle" font-family="Liberation Sans" font-size="11" font-weight="400" letter-spacing="0.05" fill="#505050" stroke="#505050" stroke-width="0.12">Cathedral</text><text x="63.2" y="205.2" text-anchor="middle" font-family="Liberation Sans" font-size="11" font-weight="400" letter-spacing="0.05" fill="#505050" stroke="#505050" stroke-width="0.12">Blessed Marie</text><text x="63.2" y="216.6" text-anchor="middle" font-family="Liberation Sans" font-size="11" font-weight="400" letter-spacing="0.05" fill="#505050" stroke="#505050" stroke-width="0.12">Rivier Catholic</text><text x="63.2" y="228.0" text-anchor="middle" font-family="Liberation Sans" font-size="11" font-weight="400" letter-spacing="0.05" fill="#505050" stroke="#505050" stroke-width="0.12">School</text><text x="331.5" y="186.0" text-anchor="middle" font-family="Liberation Sans" font-size="11" font-weight="400" letter-spacing="0.05" fill="#505050" stroke="#505050" stroke-width="0.12">14th St W</text><text x="199.3" y="322.5" text-anchor="middle" font-family="Liberation Sans" font-size="11" font-weight="400" letter-spacing="0.05" fill="#505050" stroke="#505050" stroke-width="0.12">Sign Universe</text><text x="101.6" y="342.0" text-anchor="middle" font-family="Liberation Sans" font-size="11" font-weight="400" letter-spacing="0.05" fill="#505050" stroke="#505050" stroke-width="0.12">16th St W</text><text x="397.7" y="327.0" text-anchor="middle" font-family="Liberation Sans" font-size="11" font-weight="400" letter-spacing="0.05" fill="#505050" stroke="#505050" stroke-width="0.12">16th St W</text><text x="292" y="366.5" text-anchor="middle" font-family="Liberation Sans" font-size="11" font-weight="400" letter-spacing="0.05" fill="#505050" stroke="#505050" stroke-width="0.12">3 Ave W</text><text x="157" y="408.0" text-anchor="middle" font-family="Liberation Sans" font-size="11" font-weight="400" letter-spacing="0.05" fill="#505050" stroke="#505050" stroke-width="0.12">17th St W</text><text x="460" y="397.5" text-anchor="middle" font-family="Liberation Sans" font-size="11" font-weight="400" letter-spacing="0.05" fill="#505050" stroke="#505050" stroke-width="0.12">17th St W</text><text x="421" y="431.7" text-anchor="middle" font-family="Liberation Sans" font-size="11" font-weight="400" letter-spacing="0.05" fill="#505050" stroke="#505050" stroke-width="0.12">Minute Muffler</text><text x="421" y="443.0" text-anchor="middle" font-family="Liberation Sans" font-size="11" font-weight="400" letter-spacing="0.05" fill="#505050" stroke="#505050" stroke-width="0.12">&amp; Brake</text><text x="263.6" y="468.1" text-anchor="middle" font-family="Liberation Sans" font-size="11" font-weight="400" letter-spacing="0.05" fill="#505050" stroke="#505050" stroke-width="0.12">18th St W</text><text x="355.5" y="515.8" text-anchor="middle" font-family="Liberation Sans" font-size="11" font-weight="400" letter-spacing="0.05" fill="#505050" stroke="#505050" stroke-width="0.12">Diefenbaker</text><text x="355.5" y="527.0" text-anchor="middle" font-family="Liberation Sans" font-size="11" font-weight="400" letter-spacing="0.05" fill="#505050" stroke="#505050" stroke-width="0.12">House</text><text x="318.4" y="609.1" text-anchor="middle" font-family="Liberation Sans" font-size="11" font-weight="400" letter-spacing="0.05" fill="#505050" stroke="#505050" stroke-width="0.12">20th St W</text><text x="488" y="284.8" text-anchor="middle" font-family="Liberation Sans" font-size="11" font-weight="400" letter-spacing="0.05" fill="#505050" stroke="#505050" stroke-width="0.12">Tim Hortons</text><text x="567.6" y="356.7" text-anchor="middle" font-family="Liberation Sans" font-size="11" font-weight="400" letter-spacing="0.05" fill="#505050" stroke="#505050" stroke-width="0.12">B&amp;P Water</text><text x="567.6" y="367.9" text-anchor="middle" font-family="Liberation Sans" font-size="11" font-weight="400" letter-spacing="0.05" fill="#505050" stroke="#505050" stroke-width="0.12">Shop</text><text x="612" y="148.0" text-anchor="middle" font-family="Liberation Sans" font-size="11" font-weight="400" letter-spacing="0.05" fill="#505050" stroke="#505050" stroke-width="0.12">Gateway</text><text x="612" y="159.5" text-anchor="middle" font-family="Liberation Sans" font-size="11" font-weight="400" letter-spacing="0.05" fill="#505050" stroke="#505050" stroke-width="0.12">North Plaza</text><text x="653" y="116.5" text-anchor="middle" font-family="Liberation Sans" font-size="11" font-weight="400" letter-spacing="0.05" fill="#505050" stroke="#505050" stroke-width="0.12">13th St W</text><text x="737.5" y="146.6" text-anchor="middle" font-family="Liberation Sans" font-size="11" font-weight="400" letter-spacing="0.05" fill="#505050" stroke="#505050" stroke-width="0.12">Orpheum Plaza</text><text x="850.4" y="188.6" text-anchor="middle" font-family="Liberation Sans" font-size="11" font-weight="400" letter-spacing="0.05" fill="#505050" stroke="#505050" stroke-width="0.12">14th St E</text><text x="828.3" y="238.8" text-anchor="middle" font-family="Liberation Sans" font-size="11" font-weight="400" letter-spacing="0.05" fill="#505050" stroke="#505050" stroke-width="0.12">Ywca</text><text x="821.9" y="295.9" text-anchor="middle" font-family="Liberation Sans" font-size="11" font-weight="400" letter-spacing="0.05" fill="#505050" stroke="#505050" stroke-width="0.12">Propaganda</text><text x="909.4" y="283.4" text-anchor="middle" font-family="Liberation Sans" font-size="11" font-weight="400" letter-spacing="0.05" fill="#505050" stroke="#505050" stroke-width="0.12">Ben'S Auto</text><text x="909.4" y="294.8" text-anchor="middle" font-family="Liberation Sans" font-size="11" font-weight="400" letter-spacing="0.05" fill="#505050" stroke="#505050" stroke-width="0.12">&amp; Glass</text><text x="741.7" y="386.5" text-anchor="middle" font-family="Liberation Sans" font-size="11" font-weight="400" letter-spacing="0.05" fill="#505050" stroke="#505050" stroke-width="0.12">Custom Covers</text><text x="880.8" y="398.5" text-anchor="middle" font-family="Liberation Sans" font-size="11" font-weight="400" letter-spacing="0.05" fill="#505050" stroke="#505050" stroke-width="0.12">17th St E</text><text x="668.9" y="445.0" text-anchor="middle" font-family="Liberation Sans" font-size="11" font-weight="400" letter-spacing="0.05" fill="#505050" stroke="#505050" stroke-width="0.12">Courtyard</text><text x="668.9" y="456.4" text-anchor="middle" font-family="Liberation Sans" font-size="11" font-weight="400" letter-spacing="0.05" fill="#505050" stroke="#505050" stroke-width="0.12">Manor Condo</text><text x="606" y="513.5" text-anchor="middle" font-family="Liberation Sans" font-size="11" font-weight="400" letter-spacing="0.05" fill="#505050" stroke="#505050" stroke-width="0.12">Victoria Place</text><text x="606" y="524.5" text-anchor="middle" font-family="Liberation Sans" font-size="11" font-weight="400" letter-spacing="0.05" fill="#505050" stroke="#505050" stroke-width="0.12">Condo</text><text x="569.5" y="578.0" text-anchor="middle" font-family="Liberation Sans" font-size="11" font-weight="400" letter-spacing="0.05" fill="#505050" stroke="#505050" stroke-width="0.12">Hillcrest</text><text x="731.8" y="588.7" text-anchor="middle" font-family="Liberation Sans" font-size="11" font-weight="400" letter-spacing="0.05" fill="#505050" stroke="#505050" stroke-width="0.12">Jp'S</text><text x="731.8" y="600.1" text-anchor="middle" font-family="Liberation Sans" font-size="11" font-weight="400" letter-spacing="0.05" fill="#505050" stroke="#505050" stroke-width="0.12">Convenience</text><text x="977.5" y="117.0" text-anchor="middle" font-family="Liberation Sans" font-size="11" font-weight="400" letter-spacing="0.05" fill="#505050" stroke="#505050" stroke-width="0.12">13th St E</text><text x="1123.1" y="188.6" text-anchor="middle" font-family="Liberation Sans" font-size="11" font-weight="400" letter-spacing="0.05" fill="#505050" stroke="#505050" stroke-width="0.12">14th St E</text><text x="1037.1" y="227.0" text-anchor="middle" font-family="Liberation Sans" font-size="11" font-weight="400" letter-spacing="0.05" fill="#505050" stroke="#505050" stroke-width="0.12">Pa Auto Body</text><text x="1016" y="282.1" text-anchor="middle" font-family="Liberation Sans" font-size="11" font-weight="400" letter-spacing="0.05" fill="#505050" stroke="#505050" stroke-width="0.12">A1</text><text x="1016" y="293.6" text-anchor="middle" font-family="Liberation Sans" font-size="11" font-weight="400" letter-spacing="0.05" fill="#505050" stroke="#505050" stroke-width="0.12">Transmission</text><text x="1229" y="279.7" text-anchor="middle" font-family="Liberation Sans" font-size="11" font-weight="400" letter-spacing="0.05" fill="#505050" stroke="#505050" stroke-width="0.12">Dr.Java'S</text><text x="1229" y="291.0" text-anchor="middle" font-family="Liberation Sans" font-size="11" font-weight="400" letter-spacing="0.05" fill="#505050" stroke="#505050" stroke-width="0.12">Coffe House</text><text x="343.4" y="258.1" text-anchor="middle" font-family="Liberation Sans" font-size="14" font-weight="400" letter-spacing="1.4" fill="#333" stroke="#333" stroke-width="0.12">Prince Albert</text><text x="1106.7" y="253.1" text-anchor="middle" font-family="Liberation Sans" font-size="11" font-weight="700" letter-spacing="0.5" fill="#444" stroke="#444" stroke-width="0.12">15th St E</text><text x="459" y="368.5" text-anchor="middle" font-family="Liberation Sans" font-size="11" font-weight="400" letter-spacing="0.05" fill="#505050" stroke="#505050" stroke-width="0.12" transform="rotate(-6 459 364.5)">Carlton Trail Railway</text><text x="1082" y="317.0" text-anchor="middle" font-family="Liberation Sans" font-size="11" font-weight="400" letter-spacing="0.05" fill="#505050" stroke="#505050" stroke-width="0.12" transform="rotate(-4.5 1082 313)">Carlton Trail Railway</text><text x="1088" y="346.0" text-anchor="middle" font-family="Liberation Sans" font-size="11" font-weight="400" letter-spacing="0.05" fill="#505050" stroke="#505050" stroke-width="0.12" transform="rotate(6.5 1088 342)">Carlton Trail Railway</text><text x="969" y="350.0" text-anchor="middle" font-family="Liberation Sans" font-size="11" font-weight="400" letter-spacing="0.05" fill="#505050" stroke="#505050" stroke-width="0.12" transform="rotate(7.5 969 346)">Carlton Trail Railway</text><text x="1078" y="386.5" text-anchor="middle" font-family="Liberation Sans" font-size="11" font-weight="400" letter-spacing="0.05" fill="#505050" stroke="#505050" stroke-width="0.12" transform="rotate(9 1078 382.5)">Carlton Trail Railway</text><text x="1285" y="403.0" text-anchor="middle" font-family="Liberation Sans" font-size="11" font-weight="400" letter-spacing="0.05" fill="#505050" stroke="#505050" stroke-width="0.12" transform="rotate(5 1285 399)">Carlton Trail Railway</text><text x="1146" y="423.6" text-anchor="middle" font-family="Liberation Sans" font-size="11" font-weight="400" letter-spacing="0.05" fill="#505050" stroke="#505050" stroke-width="0.12">Carlton Trail Railway</text><text x="1270" y="361.0" text-anchor="middle" font-family="Liberation Sans" font-size="11" font-weight="400" letter-spacing="0.05" fill="#505050" stroke="#505050" stroke-width="0.12" transform="rotate(30 1270 357)">Carlton Trail Railway</text><text x="103.5" y="438.0" text-anchor="middle" font-family="Liberation Sans" font-size="11" font-weight="400" letter-spacing="0.05" fill="#505050" stroke="#505050" stroke-width="0.12" transform="rotate(90 103.5 434)">5B Ave</text><text x="211" y="513.8" text-anchor="middle" font-family="Liberation Sans" font-size="11" font-weight="400" letter-spacing="0.05" fill="#505050" stroke="#505050" stroke-width="0.12" transform="rotate(-90 211 509.8)">4th Ave W</text><text x="155.5" y="595.0" text-anchor="middle" font-family="Liberation Sans" font-size="11" font-weight="400" letter-spacing="0.05" fill="#505050" stroke="#505050" stroke-width="0.12" transform="rotate(90 155.5 591)">5th Ave W</text><text x="519" y="551.0" text-anchor="middle" font-family="Liberation Sans" font-size="11" font-weight="400" letter-spacing="0.05" fill="#505050" stroke="#505050" stroke-width="0.12" transform="rotate(-90 519 547)">1 1/2 Ave W</text><text x="953.9" y="468.0" text-anchor="middle" font-family="Liberation Sans" font-size="11" font-weight="400" letter-spacing="0.05" fill="#505050" stroke="#505050" stroke-width="0.12" transform="rotate(90 953.9 464)">2nd Ave E</text><text x="1056" y="485.4" text-anchor="middle" font-family="Liberation Sans" font-size="11" font-weight="400" letter-spacing="0.05" fill="#505050" stroke="#505050" stroke-width="0.12" transform="rotate(-90 1056 481.4)">3 Ave E</text><text x="846.4" y="589.8" text-anchor="middle" font-family="Liberation Sans" font-size="11" font-weight="400" letter-spacing="0.05" fill="#505050" stroke="#505050" stroke-width="0.12" transform="rotate(-90 846.4 585.8)">1st Ave E</text><text x="452" y="654.0" text-anchor="middle" font-family="Liberation Sans" font-size="11" font-weight="700" letter-spacing="0.3" fill="#444" stroke="#444" stroke-width="0.12" transform="rotate(90 452 650)">2nd Ave W</text><text x="716.4" y="669.0" text-anchor="middle" font-family="Liberation Sans" font-size="11" font-weight="400" letter-spacing="0.05" fill="#505050" stroke="#505050" stroke-width="0.12" transform="rotate(-90 716.4 665)">2nd Ave E</text><text x="1004.5" y="576.2" text-anchor="middle" font-family="Liberation Sans" font-size="10" font-weight="400" letter-spacing="0.05" fill="#5d9a4c" stroke="#5d9a4c" stroke-width="0.12">Elks Park</text><text x="2" y="321.0" text-anchor="middle" font-family="Liberation Sans" font-size="11" font-weight="400" letter-spacing="0.05" fill="#505050" stroke="#505050" stroke-width="0.12">n</text><text x="1" y="536.0" text-anchor="middle" font-family="Liberation Sans" font-size="11" font-weight="400" letter-spacing="0.05" fill="#505050" stroke="#505050" stroke-width="0.12">W</text><circle cx="497.5" cy="467.5" r="9.5" fill="#fff" stroke="#e0e0e0" stroke-width="1"/><path d="M491.5 472.5 L497.5 463 L503.5 472.5 L500.5 472.5 L497.5 467.5 L494.5 472.5 Z" fill="#d8454a"/><circle cx="934.6" cy="487.1" r="10" fill="#dcdfd8" stroke="#557a4c" stroke-width="2.2"/><path d="M928.6 492 L934.6 482.5 L940.6 492 L937.6 492 L934.6 487 L931.6 492 Z" fill="#c9463f"/><path d="M15.8 584.8 V618.3 M15.8 601.5 H153.1 V584.8 M120 601.5 V618.3" stroke="#222" stroke-width="2" fill="none"/><text x="22.3" y="598" font-family="Liberation Sans" font-weight="700" font-size="11.8" fill="#222">200 m</text><text x="22.3" y="614.2" font-family="Liberation Sans" font-weight="700" font-size="11.8" fill="#222">500 ft</text></svg>
<div style="position:absolute;left:1262px;top:111px;width:14px;height:540px;background:linear-gradient(to right,rgba(0,0,0,0),rgba(0,0,0,0.06))"></div>
<div style="position:absolute;left:0;top:635px;width:1276px;height:16px;background:rgba(255,255,255,0.97)"></div>
<div class="a" style="left:5px;top:636.10px;font-size:11.7px;color:#4a4a4a;font-weight:400;">Esri, NASA, NGA, USGS, FEMA | Esri Community Maps Contributors, Esri Canada, Esri, TomTom, Garmin, SafeGraph, GeoTechnologies, Inc, METI/NASA, USGS, EPA, US Census Bureau, USDA, NRCan, Parks Canada</div>
<div class="bd" style="left:-1px;top:110px;width:1653px;height:542px;background:transparent;z-index:5;pointer-events:none"></div>
<div style="position:absolute;left:1276px;top:111px;width:375px;height:540px;background:#fff"></div>
<div style="position:absolute;left:1603.5px;top:110.5px;width:48px;height:49px;background:#f3f3f3;border:2px solid #4a6e3a;border-right-width:2px"></div>
<svg style="left:1600px;top:110px" width="56" height="56" viewBox="1600 110 56 56">
<path d="M1623 130.5 L1631 138.5 M1631 130.5 L1623 138.5" stroke="#222" stroke-width="1.3"/>
</svg>
<div class="hl" style="left:1276px;top:158.5px;width:328px"></div>
<div class="hl" style="left:1276px;top:192px;width:375px"></div>
<svg style="left:1280px;top:165px" width="120" height="22" viewBox="1280 165 120 22">
<circle cx="1291" cy="175" r="5.2" fill="none" stroke="#6a6a6a" stroke-width="1.1"/>
<path d="M1288.5 175 H1293.5 M1291 172.5 V177.5" stroke="#6a6a6a" stroke-width="1.1"/>
<path d="M1294.8 178.8 L1299.5 183.5" stroke="#6a6a6a" stroke-width="2"/>
<path d="M1378 169 V182 M1371.5 175.5 H1384.5 M1376 171 L1378 169 L1380 171 M1376 180 L1378 182 L1380 180 M1373.5 173.5 L1371.5 175.5 L1373.5 177.5 M1382.5 173.5 L1384.5 175.5 L1382.5 177.5" fill="none" stroke="#6a6a6a" stroke-width="1.1"/>
</svg>
<div class="a" style="left:1307.5px;top:169.00px;font-size:12.4px;color:#7a7a7a;font-weight:400;">Zoom to</div>
<div class="a" style="left:1394px;top:169.00px;font-size:12.4px;color:#7a7a7a;font-weight:400;">Pan</div>
<div class="a" style="left:1294.6px;top:206.80px;font-size:12.4px;color:#6e7c66"><b style="color:#587650;letter-spacing:-0.25px">Date Reported:</b> <span style="letter-spacing:0.05px">15/01/2025, 16:23</span></div>
<div class="a" style="left:1294.6px;top:240.80px;font-size:12.4px;color:#6e7c66"><b style="color:#587650;letter-spacing:-0.25px">Date Closed:</b> <span style="letter-spacing:0.05px">15/01/2025, 22:46</span></div>
<div class="a" style="left:1294.6px;top:275.50px;font-size:12.4px;color:#6e7c66"><b style="color:#587650;letter-spacing:-0.25px">Offence Status:</b> <span style="letter-spacing:0.05px">Closed</span></div>
<div class="a" style="left:1294.6px;top:309.80px;font-size:12.4px;color:#6e7c66"><b style="color:#587650;letter-spacing:-0.25px">Offence Type:</b> <span style="letter-spacing:0.05px">Property Amenities</span></div>
<div class="a" style="left:1294.6px;top:343.80px;font-size:12.4px;color:#6e7c66"><b style="color:#587650;letter-spacing:-0.25px">Sub Offence:</b> <span style="letter-spacing:0.05px">Encampment</span></div>
<div class="a" style="left:1294.6px;top:376.55px;font-size:14px;color:#557250;font-weight:700;text-decoration:underline;letter-spacing:-0.35px">Report an Encampment</div>
<div class="hl" style="left:1276px;top:617.5px;width:375px"></div>
<div class="vl" style="left:1578px;top:618px;height:33px"></div>
<svg style="left:1280px;top:620px" width="371" height="30" viewBox="1280 620 371 30">
<path d="M1293.5 630.5 L1289.5 634.5 L1293.5 638.5 M1322.5 630.5 L1326.5 634.5 L1322.5 638.5" fill="none" stroke="#555" stroke-width="1.1"/>
<rect x="1588.6" y="628.2" width="2.4" height="2.4" fill="none" stroke="#666" stroke-width="0.9"/>
<rect x="1588.6" y="633.8" width="2.4" height="2.4" fill="none" stroke="#666" stroke-width="0.9"/>
<rect x="1588.6" y="639.4" width="2.4" height="2.4" fill="none" stroke="#666" stroke-width="0.9"/>
<path d="M1593.5 629.4 H1602 M1593.5 635 H1602 M1593.5 640.6 H1602" stroke="#666" stroke-width="1"/>
</svg>
<div class="a" style="left:1612px;top:628.50px;font-size:12.4px;color:#7a7a7a;font-weight:400;">1 of 2</div>
<svg style="left:1640px;top:105px;z-index:7" width="22" height="22" viewBox="1640 105 22 22">
<circle cx="1650" cy="115" r="7.6" fill="#fff" stroke="#a8a8a8" stroke-width="0.8"/>
<path d="M1646 111 L1648.3 113.3 M1646 111 h2 M1646 111 v2 M1654 111 L1651.7 113.3 M1654 111 h-2 M1654 111 v2 M1646 119 L1648.3 116.7 M1646 119 h2 M1646 119 v-2 M1654 119 L1651.7 116.7 M1654 119 h-2 M1654 119 v-2" stroke="#666" stroke-width="0.8" fill="none"/>
</svg>
<div class="bd" style="left:-1px;top:660px;width:822px;height:250px"></div>
<div class="bd" style="left:829px;top:660px;width:823px;height:250px"></div>
<div class="a" style="left:8px;top:669.20px;font-size:14.3px;color:#323232;font-weight:400;letter-spacing:0.02px">Number of Encampments in 2024</div>
<div class="a" style="left:838.5px;top:669.20px;font-size:14.3px;color:#323232;font-weight:400;letter-spacing:0.02px">Number of Encampments in 2025</div>
<svg style="left:0;top:660px" width="821" height="250" viewBox="0 660 821 250"><path d="M64.6 713.8 H804.5" stroke="#ececec" stroke-width="1"/><path d="M64.6 792.9 H804.5" stroke="#ececec" stroke-width="1"/><path d="M64.6 872.0 H804.5" stroke="#cfcfcf" stroke-width="1"/><path d="M64.6 713.8 V878.0" stroke="#cfcfcf" stroke-width="1"/><path d="M248.6 713.8 V878.0" stroke="#ececec" stroke-width="1"/><path d="M432.5 713.8 V878.0" stroke="#ececec" stroke-width="1"/><path d="M618.5 713.8 V878.0" stroke="#ececec" stroke-width="1"/><path d="M804.5 713.8 V878.0" stroke="#ececec" stroke-width="1"/><path d="M64.6 713.8 V872.0" stroke="#cfcfcf" stroke-width="1"/><path d="M58.599999999999994 713.8 H64.6" stroke="#cfcfcf" stroke-width="1"/><text x="54.599999999999994" y="717.8" text-anchor="end" font-family="Liberation Sans" font-size="11" fill="#444">100</text><path d="M58.599999999999994 792.9 H64.6" stroke="#cfcfcf" stroke-width="1"/><text x="54.599999999999994" y="796.9" text-anchor="end" font-family="Liberation Sans" font-size="11" fill="#444">50</text><path d="M58.599999999999994 872.0 H64.6" stroke="#cfcfcf" stroke-width="1"/><text x="54.599999999999994" y="876.0" text-anchor="end" font-family="Liberation Sans" font-size="11" fill="#444">0</text><rect x="70.9" y="860.9" width="50.8" height="11.1" fill="#4a6e3a"/><text x="96.2" y="855.9" text-anchor="middle" font-family="Liberation Sans" font-size="11" fill="#333">7</text><rect x="133.1" y="868.8" width="47.5" height="3.2" fill="#4a6e3a"/><text x="156.9" y="863.8" text-anchor="middle" font-family="Liberation Sans" font-size="11" fill="#333">2</text><rect x="192.2" y="859.3" width="50.8" height="12.7" fill="#4a6e3a"/><text x="217.5" y="854.3" text-anchor="middle" font-family="Liberation Sans" font-size="11" fill="#333">8</text><rect x="254.6" y="838.8" width="49.1" height="33.2" fill="#4a6e3a"/><text x="279.2" y="833.8" text-anchor="middle" font-family="Liberation Sans" font-size="11" fill="#333">21</text><rect x="315.5" y="745.4" width="50.8" height="126.6" fill="#4a6e3a"/><text x="340.9" y="740.4" text-anchor="middle" font-family="Liberation Sans" font-size="11" fill="#333">80</text><rect x="377.9" y="770.8" width="49.1" height="101.2" fill="#4a6e3a"/><text x="402.5" y="765.8" text-anchor="middle" font-family="Liberation Sans" font-size="11" fill="#333">64</text><rect x="438.8" y="805.6" width="50.8" height="66.4" fill="#4a6e3a"/><text x="464.2" y="800.6" text-anchor="middle" font-family="Liberation Sans" font-size="11" fill="#333">42</text><rect x="501.5" y="819.8" width="50.8" height="52.2" fill="#4a6e3a"/><text x="526.8" y="814.8" text-anchor="middle" font-family="Liberation Sans" font-size="11" fill="#333">33</text><rect x="563.9" y="786.6" width="49.1" height="85.4" fill="#4a6e3a"/><text x="588.5" y="781.6" text-anchor="middle" font-family="Liberation Sans" font-size="11" fill="#333">54</text><rect x="624.8" y="767.6" width="50.8" height="104.4" fill="#4a6e3a"/><text x="650.2" y="762.6" text-anchor="middle" font-family="Liberation Sans" font-size="11" fill="#333">66</text><rect x="687.2" y="815.0" width="49.1" height="57.0" fill="#4a6e3a"/><text x="711.8" y="810.0" text-anchor="middle" font-family="Liberation Sans" font-size="11" fill="#333">36</text><rect x="748.1" y="854.6" width="50.8" height="17.4" fill="#4a6e3a"/><text x="773.5" y="849.6" text-anchor="middle" font-family="Liberation Sans" font-size="11" fill="#333">11</text><text x="64.6" y="892.3" text-anchor="middle" font-family="Liberation Sans" font-size="11" fill="#444">Jan</text><text x="248.6" y="892.3" text-anchor="middle" font-family="Liberation Sans" font-size="11" fill="#444">Apr</text><text x="432.5" y="892.3" text-anchor="middle" font-family="Liberation Sans" font-size="11" fill="#444">Jul</text><text x="618.5" y="892.3" text-anchor="middle" font-family="Liberation Sans" font-size="11" fill="#444">Oct</text><text x="804.5" y="892.3" text-anchor="middle" font-family="Liberation Sans" font-size="11" fill="#444">Jan</text><text x="0" y="0" transform="translate(21.6 793.6) rotate(-90)" text-anchor="middle" font-family="Liberation Sans" font-weight="700" font-size="10.6" fill="#222">&#35; of Encampments</text></svg>
<svg style="left:830px;top:660px" width="821" height="250" viewBox="830 660 821 250"><path d="M881.2 713.8 H1634.4" stroke="#ececec" stroke-width="1"/><path d="M881.2 753.3 H1634.4" stroke="#ececec" stroke-width="1"/><path d="M881.2 792.9 H1634.4" stroke="#ececec" stroke-width="1"/><path d="M881.2 832.5 H1634.4" stroke="#ececec" stroke-width="1"/><path d="M881.2 872.0 H1634.4" stroke="#cfcfcf" stroke-width="1"/><path d="M881.2 713.8 V878.0" stroke="#cfcfcf" stroke-width="1"/><path d="M1276.9 713.8 V878.0" stroke="#ececec" stroke-width="1"/><path d="M1634.4 713.8 V878.0" stroke="#ececec" stroke-width="1"/><path d="M881.2 713.8 V872.0" stroke="#cfcfcf" stroke-width="1"/><path d="M875.2 713.8 H881.2" stroke="#cfcfcf" stroke-width="1"/><text x="871.7" y="717.8" text-anchor="end" font-family="Liberation Sans" font-size="11" fill="#444">8</text><path d="M875.2 753.3 H881.2" stroke="#cfcfcf" stroke-width="1"/><text x="871.7" y="757.3" text-anchor="end" font-family="Liberation Sans" font-size="11" fill="#444">6</text><path d="M875.2 792.9 H881.2" stroke="#cfcfcf" stroke-width="1"/><text x="871.7" y="796.9" text-anchor="end" font-family="Liberation Sans" font-size="11" fill="#444">4</text><path d="M875.2 832.5 H881.2" stroke="#cfcfcf" stroke-width="1"/><text x="871.7" y="836.5" text-anchor="end" font-family="Liberation Sans" font-size="11" fill="#444">2</text><path d="M875.2 872.0 H881.2" stroke="#cfcfcf" stroke-width="1"/><text x="871.7" y="876.0" text-anchor="end" font-family="Liberation Sans" font-size="11" fill="#444">0</text><rect x="920.8" y="733.6" width="317.4" height="138.4" fill="#4a6e3a"/><text x="1079.1" y="727.6" text-anchor="middle" font-family="Liberation Sans" font-size="11" fill="#333">7</text><text x="1079.1" y="892.3" text-anchor="middle" font-family="Liberation Sans" font-size="11" fill="#444">Jan</text><rect x="1312.7" y="852.2" width="286.7" height="19.8" fill="#4a6e3a"/><text x="1455.7" y="846.2" text-anchor="middle" font-family="Liberation Sans" font-size="11" fill="#333">1</text><text x="1455.7" y="892.3" text-anchor="middle" font-family="Liberation Sans" font-size="11" fill="#444">Feb</text><text x="0" y="0" transform="translate(851 793.6) rotate(-90)" text-anchor="middle" font-family="Liberation Sans" font-weight="700" font-size="10.6" fill="#222">&#35; of Encampments</text></svg>
<div class="bd" style="left:1660px;top:110px;width:243px;height:261px"></div>
<div class="bd" style="left:1660px;top:379px;width:243px;height:262px"></div>
<div class="bd" style="left:1660px;top:649px;width:243px;height:261px"></div>
<div class="a" style="left:1667.8px;top:121.14px;font-size:12px;color:#5f7a55;font-weight:400;">Encampments in the last 30 days</div>
<div class="a" style="left:1661.5px;width:240px;text-align:center;top:148.38px;font-size:30.5px;color:#4a6b3c;font-weight:400;letter-spacing:1.3px">Closed</div>
<div class="a" style="left:1661.5px;width:240px;text-align:center;top:339.08px;font-size:24px;color:#4a6b3c;font-weight:400;letter-spacing:0.25px">Total Reported: 8</div>
<div class="a" style="left:1661.5px;width:240px;text-align:center;top:399.74px;font-size:19.8px;color:#4a6b3c;font-weight:400;letter-spacing:0.3px">Date Range Selected</div>
<div class="a" style="left:1661.5px;width:240px;text-align:center;top:585.70px;font-size:28px;color:#4a6b3c;font-weight:400;letter-spacing:1.5px">Current year</div>
<div class="a" style="left:1661.5px;width:240px;text-align:center;top:676.45px;font-size:29px;color:#4a6b3c;font-weight:400;letter-spacing:1.05px">Previous Year</div>
<div class="a" style="left:1663.5px;width:240px;text-align:center;top:853.45px;font-size:29px;color:#4a6b3c;font-weight:400;letter-spacing:1.5px">Total</div>
<svg style="left:1660px;top:200px" width="243" height="640" viewBox="1660 200 243 640">
<g fill="#4a6b3c">
<ellipse cx="1782" cy="240" rx="27.65" ry="23.1"/>
<ellipse cx="1782" cy="281.5" rx="30.5" ry="27"/>
</g>
<g fill="#fff">
<ellipse cx="1782" cy="241.7" rx="13" ry="12.7"/>
<ellipse cx="1782.2" cy="282" rx="15.5" ry="15"/>
</g>
<path d="M1751.5 460.1 H1809.9 V473 L1775.7 545.6 H1759 L1795.3 472.7 H1751.5 Z" fill="#4a6b3c"/>
<path fill-rule="evenodd" fill="#4a6b3c" d="M1688.2 791.2 L1722.5 742.9 H1734.8 V791.2 H1744.9 V801.4 H1734.8 V816.7 H1722.5 V801.4 H1688.2 Z M1701 791.2 L1722.5 757 V791.2 Z"/>
<path fill-rule="evenodd" fill="#4a6b3c" d="M1816.6 791.2 L1850.7 742.9 H1862.8 V791.2 H1873.8 V801.4 H1862.8 V816.7 H1850.7 V801.4 H1816.6 Z M1829.2 791.2 L1850.7 757 V791.2 Z"/>
<path fill="#4a6b3c" d="M1757.2 759 C1759.5 747.5 1768.5 740.8 1782 740.8 C1796.5 740.8 1806.6 750 1806.6 763.5 C1806.6 773 1801.5 780 1793.5 787.5 L1772.4 805.6 H1806.9 V816.7 H1757.2 V805.6 L1785 779.5 C1791 774 1794.5 769.5 1794.5 763.5 C1794.5 755.5 1789 750.8 1782 750.8 C1775 750.8 1769.8 755 1768.8 763.4 Z"/>
</svg>
<svg style="left:1858px;top:865px" width="50" height="50" viewBox="1858 865 50 50">
<circle cx="1882.7" cy="890.5" r="23" fill="rgba(0,0,0,0.08)"/><circle cx="1882.7" cy="889.5" r="21.6" fill="#4a6e3a"/>
<path d="M1875.5 884.5 A10 10 0 1 1 1874 893" fill="none" stroke="#e8f2e0" stroke-width="1.1"/>
<path d="M1872.5 880 L1875.5 884.8 L1880.5 883.5" fill="none" stroke="#e8f2e0" stroke-width="1.1"/>
</svg>

</body></html>
